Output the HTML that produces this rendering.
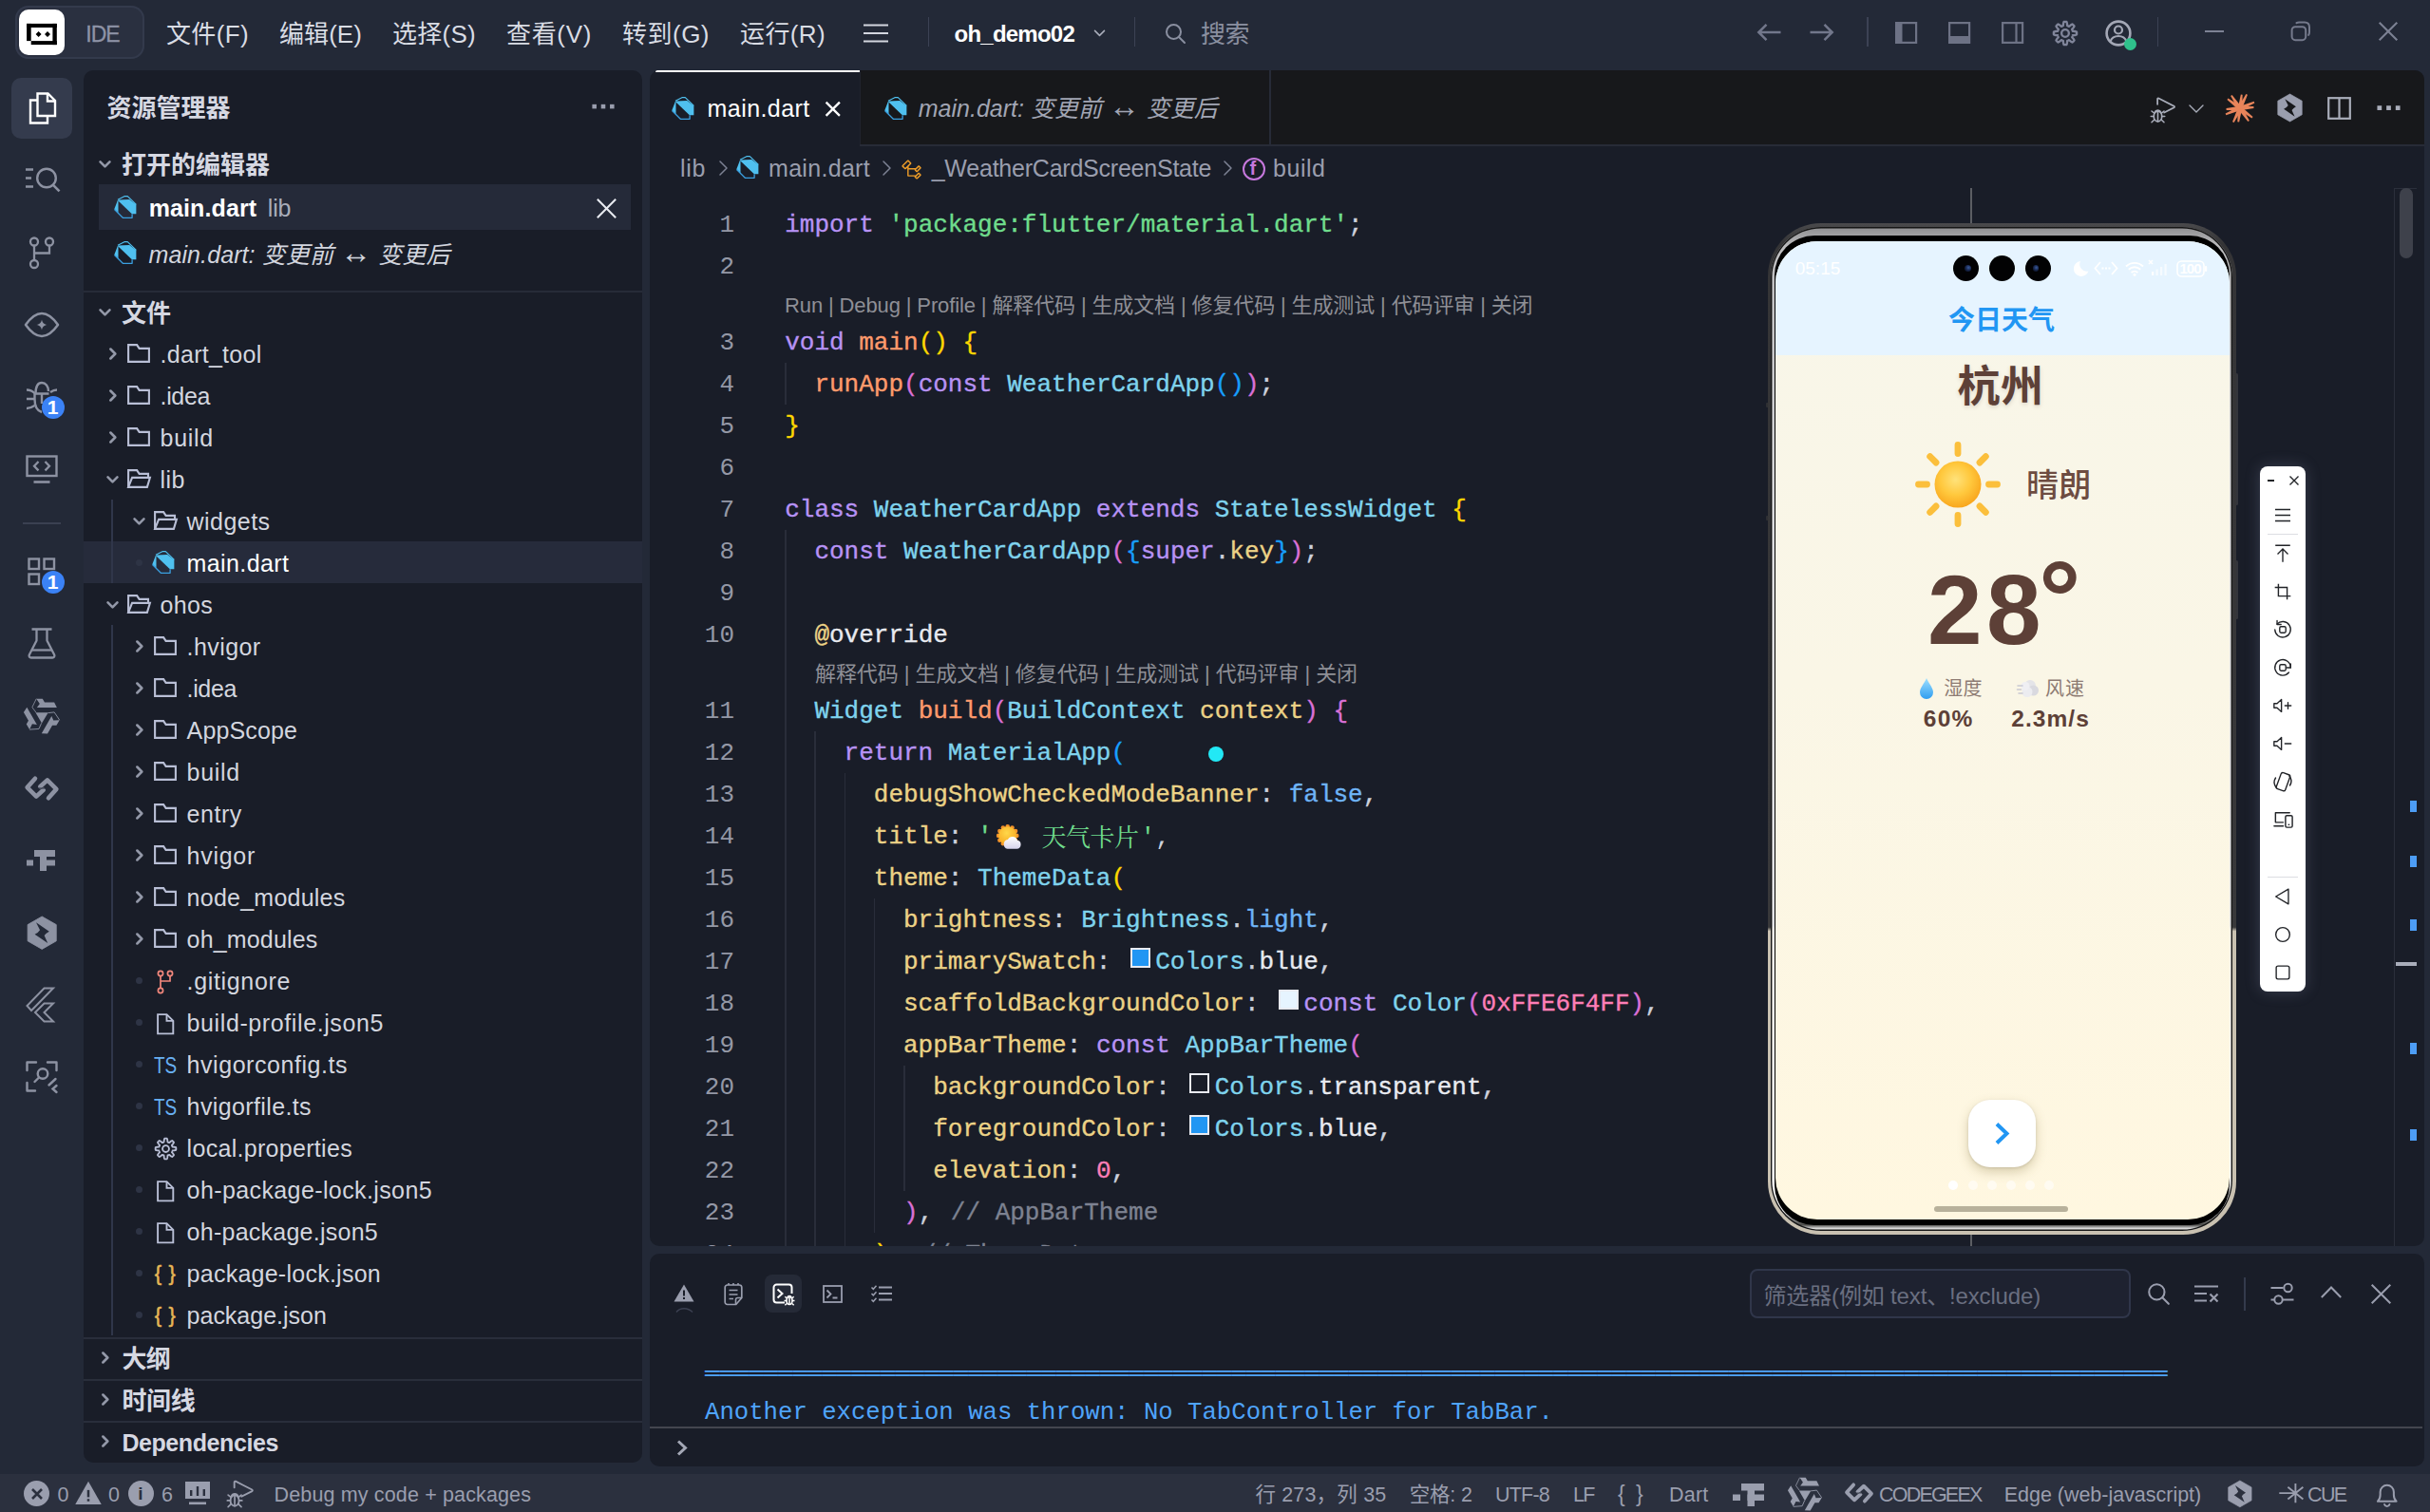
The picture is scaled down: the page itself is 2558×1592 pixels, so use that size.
<!DOCTYPE html>
<html lang="zh-CN"><head><meta charset="utf-8"><title>IDE - oh_demo02</title>
<style>
html,body{margin:0;padding:0;}
body{width:2558px;height:1592px;overflow:hidden;background:#232937;position:relative;font-family:'Liberation Sans','Noto Sans CJK SC',sans-serif;font-size:25px;color:#d3d6df;}
.a{position:absolute;display:block;}
.t{position:absolute;white-space:pre;}
.c{position:absolute;overflow:hidden;}
svg{overflow:visible;}
</style></head>
<body>
<div class="a" style="left:88px;top:74px;width:588px;height:1466px;background:#191d28;border-radius:10px;"></div>
<div class="a" style="left:684px;top:74px;width:1868px;height:1238px;background:#191d28;border-radius:10px;"></div>
<div class="a" style="left:684px;top:1320px;width:1868px;height:224px;background:#191d28;border-radius:10px;"></div>
<div class="a" style="left:0px;top:1552px;width:2558px;height:40px;background:#2b303e;"></div>
<div class="a" style="left:16.200px;top:6px;width:136px;height:56px;border-radius:14px;background:#2a3040;box-shadow:inset 0 0 0 2px #333a4c;"></div>
<div class="a" style="left:20px;top:10px;width:48px;height:48.3px;background:#ffffff;border-radius:10px;"></div>
<svg class="a" style="left:20px;top:10px;" width="48" height="48" viewBox="0 0 48 48"><rect x="8.100" y="14.900" width="31.700" height="4.100" fill="#000"/><rect x="8.100" y="14.900" width="4.600" height="18.200" fill="#000"/><rect x="35.400" y="14.900" width="4.400" height="22.200" fill="#000"/><rect x="12.700" y="33.100" width="27.100" height="4" fill="#000"/><path d="M20.600 23l3 3-3 3-3-3zM30 23l3 3-3 3-3-3z" fill="#000"/></svg>
<div class="t" id="f1" style="top:15.93px;height:40px;line-height:40px;font-size:23px;color:#8e93a6;left:90.2px;letter-spacing:-0.948px;-webkit-text-stroke-width:0.3px;">IDE</div>
<div class="t" id="f2" style="top:15.99px;height:40px;line-height:40px;font-size:26px;color:#d9dce4;left:175px;letter-spacing:0.359px;">文件(F)</div>
<div class="t" id="f3" style="top:15.99px;height:40px;line-height:40px;font-size:26px;color:#d9dce4;left:294px;letter-spacing:0.066px;">编辑(E)</div>
<div class="t" id="f4" style="top:15.99px;height:40px;line-height:40px;font-size:26px;color:#d9dce4;left:413px;letter-spacing:0.266px;">选择(S)</div>
<div class="t" id="f5" style="top:15.99px;height:40px;line-height:40px;font-size:26px;color:#d9dce4;left:533px;letter-spacing:0.666px;">查看(V)</div>
<div class="t" id="f6" style="top:15.99px;height:40px;line-height:40px;font-size:26px;color:#d9dce4;left:655px;letter-spacing:0.491px;">转到(G)</div>
<div class="t" id="f7" style="top:15.99px;height:40px;line-height:40px;font-size:26px;color:#d9dce4;left:779px;letter-spacing:0.381px;">运行(R)</div>
<svg class="a" style="left:909px;top:24px;" width="26" height="22" viewBox="0 0 26 22"><path d="M0 2.5h26M0 11h26M0 19.5h26" stroke="#d3d6df" stroke-width="2.2" fill="none"/></svg>
<div class="a" style="left:976.5px;top:18px;width:1.5px;height:31px;background:#3c4254;"></div>
<div class="t" id="f8" style="top:15.68px;height:40px;line-height:40px;font-size:24px;color:#ffffff;left:1004.5px;font-weight:700;letter-spacing:-0.764px;">oh_demo02</div>
<svg class="a" style="left:1148.5px;top:25.5px;" width="17" height="17" viewBox="0 0 24 24"><polyline points="5,9 12,16 19,9" fill="none" stroke="#a9adba" stroke-width="2.2" stroke-linecap="round" stroke-linejoin="round" /></svg>
<div class="a" style="left:1193.5px;top:18px;width:1.5px;height:31px;background:#3c4254;"></div>
<svg class="a" style="left:1225.0px;top:23.0px;" width="24" height="24" viewBox="0 0 24 24"><circle cx="10.5" cy="10.5" r="7.5" fill="none" stroke="#8a8fa0" stroke-width="2" stroke-linecap="round" stroke-linejoin="round" /><path d="M16 16L22 22" fill="none" stroke="#8a8fa0" stroke-width="2" stroke-linecap="round" stroke-linejoin="round" /></svg>
<div class="t" id="f9" style="top:15.99px;height:40px;line-height:40px;font-size:26px;color:#8a8fa0;left:1264px;letter-spacing:-0.508px;">搜索</div>
<svg class="a" style="left:1849px;top:25px;" width="26" height="18" viewBox="0 0 26 18"><path d="M25.500 9H2.500M10.500 0.800L2.300 9l8.200 8.200" fill="none" stroke="#72778b" stroke-width="2.500"/></svg>
<svg class="a" style="left:1905px;top:25px;" width="26" height="18" viewBox="0 0 26 18"><path d="M0.500 9h23M15.500 0.800L23.700 9l-8.200 8.200" fill="none" stroke="#72778b" stroke-width="2.500"/></svg>
<div class="a" style="left:1965px;top:18px;width:1.5px;height:31px;background:#3c4254;"></div>
<svg class="a" style="left:1994.5px;top:23px;" width="24" height="23" viewBox="0 0 24 23"><rect x="1.100" y="1.100" width="21" height="20.800" fill="none" stroke="#6d7285" stroke-width="2.200"/><rect x="1" y="1" width="6.500" height="21" fill="#6d7285"/></svg>
<svg class="a" style="left:2050.5px;top:23px;" width="24" height="23" viewBox="0 0 24 23"><rect x="1.100" y="1.100" width="21" height="20.800" fill="none" stroke="#6d7285" stroke-width="2.200"/><rect x="1" y="15" width="21" height="7" fill="#6d7285"/></svg>
<svg class="a" style="left:2106.5px;top:23px;" width="24" height="23" viewBox="0 0 24 23"><rect x="1.100" y="1.100" width="21" height="20.800" fill="none" stroke="#6d7285" stroke-width="2.200"/><path d="M15.500 1v21" stroke="#6d7285" stroke-width="2.200"/></svg>
<svg class="a" style="left:2160.0px;top:20.5px;" width="28" height="28" viewBox="0 0 24 24"><polygon points="12.00,1.60 12.41,1.61 12.82,1.63 13.22,1.67 13.52,2.42 13.70,3.47 13.80,4.51 13.90,5.26 14.16,5.34 14.42,5.43 14.68,5.53 14.93,5.64 15.18,5.76 15.42,5.89 16.02,5.43 16.83,4.77 17.70,4.15 18.44,3.83 18.75,4.09 19.06,4.36 19.35,4.65 19.64,4.94 19.91,5.25 20.17,5.56 19.85,6.30 19.23,7.17 18.57,7.98 18.11,8.58 18.24,8.82 18.36,9.07 18.47,9.32 18.57,9.58 18.66,9.84 18.74,10.10 19.49,10.20 20.53,10.30 21.58,10.48 22.33,10.78 22.37,11.18 22.39,11.59 22.40,12.00 22.39,12.41 22.37,12.82 22.33,13.22 21.58,13.52 20.53,13.70 19.49,13.80 18.74,13.90 18.66,14.16 18.57,14.42 18.47,14.68 18.36,14.93 18.24,15.18 18.11,15.42 18.57,16.02 19.23,16.83 19.85,17.70 20.17,18.44 19.91,18.75 19.64,19.06 19.35,19.35 19.06,19.64 18.75,19.91 18.44,20.17 17.70,19.85 16.83,19.23 16.02,18.57 15.42,18.11 15.18,18.24 14.93,18.36 14.68,18.47 14.42,18.57 14.16,18.66 13.90,18.74 13.80,19.49 13.70,20.53 13.52,21.58 13.22,22.33 12.82,22.37 12.41,22.39 12.00,22.40 11.59,22.39 11.18,22.37 10.78,22.33 10.48,21.58 10.30,20.53 10.20,19.49 10.10,18.74 9.84,18.66 9.58,18.57 9.32,18.47 9.07,18.36 8.82,18.24 8.58,18.11 7.98,18.57 7.17,19.23 6.30,19.85 5.56,20.17 5.25,19.91 4.94,19.64 4.65,19.35 4.36,19.06 4.09,18.75 3.83,18.44 4.15,17.70 4.77,16.83 5.43,16.02 5.89,15.42 5.76,15.18 5.64,14.93 5.53,14.68 5.43,14.42 5.34,14.16 5.26,13.90 4.51,13.80 3.47,13.70 2.42,13.52 1.67,13.22 1.63,12.82 1.61,12.41 1.60,12.00 1.61,11.59 1.63,11.18 1.67,10.78 2.42,10.48 3.47,10.30 4.51,10.20 5.26,10.10 5.34,9.84 5.43,9.58 5.53,9.32 5.64,9.07 5.76,8.82 5.89,8.58 5.43,7.98 4.77,7.17 4.15,6.30 3.83,5.56 4.09,5.25 4.36,4.94 4.65,4.65 4.94,4.36 5.25,4.09 5.56,3.83 6.30,4.15 7.17,4.77 7.98,5.43 8.58,5.89 8.82,5.76 9.07,5.64 9.32,5.53 9.58,5.43 9.84,5.34 10.10,5.26 10.20,4.51 10.30,3.47 10.48,2.42 10.78,1.67 11.18,1.63 11.59,1.61" fill="none" stroke="#80859a" stroke-width="2.0" stroke-linecap="round" stroke-linejoin="round" /><circle cx="12" cy="12" r="3.3" fill="none" stroke="#80859a" stroke-width="2.0" stroke-linecap="round" stroke-linejoin="round" /></svg>
<svg class="a" style="left:2215px;top:20px;" width="30" height="30" viewBox="0 0 30 30"><circle cx="15" cy="15" r="12.400" fill="none" stroke="#a4a8b6" stroke-width="2.600"/><circle cx="15" cy="11.5" r="4" fill="none" stroke="#a4a8b6" stroke-width="2.2"/><path d="M6.5 23.5c1.5-4 4.5-5.5 8.5-5.5s7 1.5 8.5 5.5" fill="none" stroke="#a4a8b6" stroke-width="2.2"/></svg>
<div class="a" style="left:2236px;top:40px;width:12.5px;height:12.5px;background:#2fc18c;border-radius:7px;"></div>
<div class="a" style="left:2270.5px;top:18px;width:1.5px;height:31px;background:#3c4254;"></div>
<div class="a" style="left:2320.5px;top:31.8px;width:20.3px;height:2.2px;background:#7d8294;"></div>
<svg class="a" style="left:2411px;top:22px;" width="22" height="21" viewBox="0 0 22 21"><rect x="1.600" y="6.200" width="14.600" height="14" rx="3.600" fill="none" stroke="#757a8c" stroke-width="2"/><path d="M6.500 2.200c.8-.5 1.700-.7 2.800-.7H15c3 0 5 2 5 5v5.200c0 1.400-.3 2.400-.9 3.200" fill="none" stroke="#757a8c" stroke-width="2" stroke-linecap="round"/></svg>
<svg class="a" style="left:2504px;top:22.5px;" width="20" height="20" viewBox="0 0 20 20"><path d="M0.700 0.700l18.600 18.600M19.300 0.700L0.700 19.300" stroke="#7c8193" stroke-width="2.100" fill="none"/></svg>
<div class="a" style="left:12px;top:82px;width:64px;height:64px;background:#343b4d;border-radius:10px;"></div>
<svg class="a" style="left:30px;top:97px;" width="30" height="34" viewBox="0 0 30 34"><path d="M9.5 1.5h11l7.5 7.5v16h-18.5z" fill="none" stroke="#fff" stroke-width="2.4" stroke-linejoin="miter"/><path d="M20 1.5v8h8" fill="none" stroke="#fff" stroke-width="2.4"/><path d="M9.5 8.5h-7.5v24h18v-7" fill="none" stroke="#fff" stroke-width="2.4"/></svg>
<svg class="a" style="left:26px;top:176px;" width="38" height="27" viewBox="0 0 38 27"><circle cx="23" cy="11.5" r="9.8" fill="none" stroke="#8d92a2" stroke-width="2.4"/><path d="M30 18.8l6.5 6.5" stroke="#8d92a2" stroke-width="2.6" fill="none"/><path d="M1 2.5h8M1 11.5h6M1 20.500h8" stroke="#8d92a2" stroke-width="2.4" fill="none"/></svg>
<svg class="a" style="left:30px;top:249px;" width="28" height="35" viewBox="0 0 28 35"><circle cx="6" cy="5.5" r="4" fill="none" stroke="#8d92a2" stroke-width="2.3"/><circle cx="22" cy="5.5" r="4" fill="none" stroke="#8d92a2" stroke-width="2.3"/><circle cx="6" cy="29" r="4" fill="none" stroke="#8d92a2" stroke-width="2.3"/><path d="M6 9.500v15.5M22 9.500v8h-16" fill="none" stroke="#8d92a2" stroke-width="2.3"/></svg>
<svg class="a" style="left:25px;top:328px;" width="38" height="28" viewBox="0 0 38 28"><path d="M2 14C8 5.500 13 2 19 2s11 3.500 17 12c-6 8.500-11 12-17 12S8 22.500 2 14z" fill="none" stroke="#8d92a2" stroke-width="2.5" stroke-linejoin="round"/><path d="M19 8.500c.8 3.500 2 4.700 5.500 5.500-3.500.8-4.700 2-5.500 5.500-.8-3.500-2-4.700-5.500-5.500 3.500-.8 4.700-2 5.500-5.500z" fill="#8d92a2"/></svg>
<svg class="a" style="left:27px;top:401px;" width="34" height="34" viewBox="0 0 34 34"><path d="M17 33C10 31 9.500 24 9.500 19v-5.500h15" fill="none" stroke="#8d92a2" stroke-width="2.4"/><path d="M10.500 13.500C10.500 6 13 2 17 2s7 3.500 7 9" fill="none" stroke="#8d92a2" stroke-width="2.4"/><path d="M17 13.500V24M1 9.500c4 0 6 1 8.500 3.500M1 19h8M1 29c3.500 0 5.500-1 8.500-3M33 9.500c-3 0-5 1-7 2.500" fill="none" stroke="#8d92a2" stroke-width="2.4"/></svg>
<div class="a" style="left:44px;top:417px;width:24px;height:24px;background:#3b82f6;border-radius:12px;"></div>
<div class="t" style="top:409.02px;height:40px;line-height:40px;font-size:21px;color:#fff;left:49.8px;font-weight:700;">1</div>
<svg class="a" style="left:27px;top:479px;" width="34" height="31" viewBox="0 0 34 31"><rect x="1.500" y="1.500" width="31" height="20.500" fill="none" stroke="#8d92a2" stroke-width="2.4"/><path d="M8.500 28.500h17" stroke="#8d92a2" stroke-width="2.6" fill="none"/><path d="M13.500 7l-4.500 4.700 4.500 4.700M20.500 7l4.500 4.700-4.500 4.700" fill="none" stroke="#8d92a2" stroke-width="2.3"/></svg>
<div class="a" style="left:24px;top:549.5px;width:40px;height:2px;background:#3a4051;"></div>
<svg class="a" style="left:29px;top:587px;" width="30" height="30" viewBox="0 0 30 30"><rect x="1.500" y="1.500" width="10.500" height="10.500" fill="none" stroke="#8d92a2" stroke-width="2.4"/><rect x="17.500" y="1.500" width="10.500" height="10.500" fill="none" stroke="#8d92a2" stroke-width="2.4"/><rect x="1.500" y="17.500" width="10.500" height="10.500" fill="none" stroke="#8d92a2" stroke-width="2.4"/></svg>
<div class="a" style="left:44px;top:601px;width:24px;height:24px;background:#3b82f6;border-radius:12px;"></div>
<div class="t" style="top:593.02px;height:40px;line-height:40px;font-size:21px;color:#fff;left:49.8px;font-weight:700;">1</div>
<svg class="a" style="left:29px;top:661px;" width="30" height="33" viewBox="0 0 30 33"><path d="M4.500 1.500h21M9.500 1.500v12L1.800 28.500c-.6 1.500.3 3 2 3h22.400c1.700 0 2.600-1.500 2-3L20.500 13.500v-12" fill="none" stroke="#8d92a2" stroke-width="2.3" stroke-linejoin="round"/><path d="M5 23.500h20" stroke="#8d92a2" stroke-width="2.3" fill="none"/></svg>
<svg class="a" style="left:26.0px;top:736.0px;" width="36" height="36" viewBox="0 0 24 24"><g transform="rotate(0 12 12)"><polygon points="8.160,-0.170 12.530,-0.170 13.980,2.340 20.730,2.340 22.580,6.050 8.560,6.050 10.540,3.400" fill="#8d92a2"/><polyline points="8.160,-0.170 5.250,5.780 7.900,9.350" fill="none" stroke="#8d92a2" stroke-width="0.550"/></g><g transform="rotate(120 12 12)"><polygon points="8.160,-0.170 12.530,-0.170 13.980,2.340 20.730,2.340 22.580,6.050 8.560,6.050 10.540,3.400" fill="#8d92a2"/><polyline points="8.160,-0.170 5.250,5.780 7.900,9.350" fill="none" stroke="#8d92a2" stroke-width="0.550"/></g><g transform="rotate(240 12 12)"><polygon points="8.160,-0.170 12.530,-0.170 13.980,2.340 20.730,2.340 22.580,6.050 8.560,6.050 10.540,3.400" fill="#8d92a2"/><polyline points="8.160,-0.170 5.250,5.780 7.900,9.350" fill="none" stroke="#8d92a2" stroke-width="0.550"/></g><polygon points="7.630,9.490 16.500,9.490 12,17.030" fill="#8d92a2"/></svg>
<svg class="a" style="left:25.0px;top:811.0px;" width="38" height="38" viewBox="0 0 24 24"><path d="M7.560 5.560L2.300 11.450L8.320 17.460L13.080 13.080" fill="none" stroke="#8d92a2" stroke-width="2.9" stroke-linejoin="round" stroke-linecap="round"/><path d="M16.440 18.440L21.700 12.550L15.680 6.540L10.920 10.920" fill="none" stroke="#8d92a2" stroke-width="2.9" stroke-linejoin="round" stroke-linecap="round"/><path d="M9.800 12H14.400" stroke="#232937" stroke-width="0.600" fill="none"/></svg>
<svg class="a" style="left:28px;top:895px;" width="30" height="22" viewBox="0 0 30 22"><rect x="8" y="0" width="22" height="7" fill="#8d92a2"/><rect x="14" y="7" width="7" height="15" fill="#8d92a2"/><rect x="14" y="10.500" width="16" height="6" fill="#8d92a2"/><rect x="0" y="10.500" width="7" height="6" fill="#8d92a2"/></svg>
<svg class="a" style="left:26.8px;top:964.8px;" width="34.4" height="34.4" viewBox="0 0 24 24"><polygon points="12,0 22.500,6 22.500,18 12,24 1.500,18 1.500,6" fill="#8d92a2" stroke="#8d92a2" stroke-width="0.600" stroke-linejoin="round"/><path d="M7.700 4.300L17.300 11Q15 12.300 13.700 14L16.200 19.600L6.700 13.100Q9.500 11.800 10.500 10Z" fill="#232937"/></svg>
<svg class="a" style="left:27px;top:1039px;" width="31" height="38" viewBox="0 0 31 38"><path d="M19.500 1.500h9.500L6 25 1.500 20z" fill="none" stroke="#8d92a2" stroke-width="2" stroke-linejoin="miter"/><path d="M19.500 17.500h9.500L19.500 27l9.500 9.500h-9.500L10 27z" fill="none" stroke="#8d92a2" stroke-width="2" stroke-linejoin="miter"/></svg>
<svg class="a" style="left:27px;top:1117px;" width="34" height="34" viewBox="0 0 34 34"><path d="M1.500 10V1.500H11M23 1.500h9.500V10M1.500 23v8.500H10" fill="none" stroke="#8d92a2" stroke-width="2.4" stroke-linecap="round" stroke-linejoin="round"/><circle cx="18" cy="13.500" r="5.300" fill="none" stroke="#8d92a2" stroke-width="2.4"/><path d="M14 17.500l-4.500 4.500" stroke="#8d92a2" stroke-width="2.4" stroke-linecap="round"/><path d="M31.500 19l-7 6.500M32.500 26l-4 3.500 4 3.500" fill="none" stroke="#8d92a2" stroke-width="2.4" stroke-linecap="round"/></svg>
<div class="a" style="left:25px;top:1559px;width:27px;height:27px;background:#9a9eae;border-radius:14px;"></div>
<svg class="a" style="left:31.5px;top:1565.5px;" width="14" height="14" viewBox="0 0 14 14"><path d="M2 2l10 10M12 2L2 12" stroke="#2b303e" stroke-width="2.6" fill="none"/></svg>
<div class="t" style="top:1553.65px;height:40px;line-height:40px;font-size:21.5px;color:#9a9eae;left:60.5px;">0</div>
<svg class="a" style="left:78.0px;top:1556.8px;" width="30" height="30" viewBox="0 0 24 24"><path d="M12 2.2L23 21.5H1z" fill="#9a9eae"/><rect x="11" y="9.5" width="2" height="6" fill="#2b303e"/><rect x="11" y="17" width="2" height="2" fill="#2b303e"/></svg>
<div class="t" style="top:1553.65px;height:40px;line-height:40px;font-size:21.5px;color:#9a9eae;left:114px;">0</div>
<div class="a" style="left:134.5px;top:1559px;width:27px;height:27px;background:#9a9eae;border-radius:14px;"></div>
<div class="t" style="top:1553.02px;height:40px;line-height:40px;font-size:19px;color:#2b303e;left:145.2px;font-weight:700;">i</div>
<div class="t" style="top:1553.65px;height:40px;line-height:40px;font-size:21.5px;color:#9a9eae;left:170px;">6</div>
<svg class="a" style="left:195px;top:1560px;" width="26" height="25" viewBox="0 0 26 25"><rect x="0" y="0" width="26" height="18" fill="#9a9eae"/><rect x="5" y="9" width="2.400" height="6" fill="#2b303e"/><rect x="11.800" y="5" width="2.400" height="10" fill="#2b303e"/><rect x="18.600" y="8" width="2.400" height="7" fill="#2b303e"/><rect x="4" y="21.500" width="18" height="2.600" fill="#9a9eae"/></svg>
<svg class="a" style="left:238.0px;top:1556.5px;" width="32" height="32" viewBox="0 0 24 24"><path d="M6.5 7V2.6c0-.5.5-.8 1-.6l13 6.6c.5.3.5.9 0 1.2L12.2 14" fill="none" stroke="#9a9eae" stroke-width="1.4" stroke-linecap="round" stroke-linejoin="round" /><ellipse cx="6.8" cy="17.2" rx="3.4" ry="4.3" fill="none" stroke="#9a9eae" stroke-width="1.4" stroke-linecap="round" stroke-linejoin="round" /><path d="M4.2 13.8a2.8 2.8 0 0 1 5.2 0" fill="none" stroke="#9a9eae" stroke-width="1.4" stroke-linecap="round" stroke-linejoin="round" /><path d="M6.8 13.5v8M3.4 17.2H1M12.6 17.2h-2.4M3.8 14.6L1.6 12.8M9.8 14.6l2.2-1.8M3.9 20l-2.3 2.2M9.7 20l2.3 2.2" fill="none" stroke="#9a9eae" stroke-width="1.26" stroke-linecap="round" stroke-linejoin="round" /></svg>
<div class="t" id="f10" style="top:1553.65px;height:40px;line-height:40px;font-size:21.5px;color:#9a9eae;left:288.6px;letter-spacing:0.141px;">Debug my code + packages</div>
<div class="t" id="f11" style="top:1553.65px;height:40px;line-height:40px;font-size:21.5px;color:#9a9eae;left:1321.4px;letter-spacing:0.177px;">行 273，列 35</div>
<div class="t" id="f12" style="top:1553.65px;height:40px;line-height:40px;font-size:21.5px;color:#9a9eae;left:1483.7px;letter-spacing:-0.181px;">空格: 2</div>
<div class="t" id="f13" style="top:1553.65px;height:40px;line-height:40px;font-size:21.5px;color:#9a9eae;left:1574px;letter-spacing:-0.784px;">UTF-8</div>
<div class="t" id="f14" style="top:1553.65px;height:40px;line-height:40px;font-size:21.5px;color:#9a9eae;left:1656px;letter-spacing:-1.797px;">LF</div>
<div class="t" id="f15" style="top:1552.63px;height:40px;line-height:40px;font-size:23px;color:#9a9eae;left:1703px;letter-spacing:2.411px;">{ }</div>
<div class="t" id="f16" style="top:1553.65px;height:40px;line-height:40px;font-size:21.5px;color:#9a9eae;left:1757px;letter-spacing:0.219px;">Dart</div>
<svg class="a" style="left:1824px;top:1562px;" width="33" height="24" viewBox="0 0 33 24"><rect x="9" y="0" width="24" height="7.500" fill="#9a9eae"/><rect x="15.500" y="7" width="7.500" height="17" fill="#9a9eae"/><rect x="15.500" y="11.500" width="17.500" height="6.500" fill="#9a9eae"/><rect x="0" y="11.500" width="8" height="6.500" fill="#9a9eae"/></svg>
<svg class="a" style="left:1883.0px;top:1556.0px;" width="34" height="34" viewBox="0 0 24 24"><g transform="rotate(0 12 12)"><polygon points="8.160,-0.170 12.530,-0.170 13.980,2.340 20.730,2.340 22.580,6.050 8.560,6.050 10.540,3.400" fill="#9a9eae"/><polyline points="8.160,-0.170 5.250,5.780 7.900,9.350" fill="none" stroke="#9a9eae" stroke-width="0.550"/></g><g transform="rotate(120 12 12)"><polygon points="8.160,-0.170 12.530,-0.170 13.980,2.340 20.730,2.340 22.580,6.050 8.560,6.050 10.540,3.400" fill="#9a9eae"/><polyline points="8.160,-0.170 5.250,5.780 7.900,9.350" fill="none" stroke="#9a9eae" stroke-width="0.550"/></g><g transform="rotate(240 12 12)"><polygon points="8.160,-0.170 12.530,-0.170 13.980,2.340 20.730,2.340 22.580,6.050 8.560,6.050 10.540,3.400" fill="#9a9eae"/><polyline points="8.160,-0.170 5.250,5.780 7.900,9.350" fill="none" stroke="#9a9eae" stroke-width="0.550"/></g><polygon points="7.630,9.490 16.500,9.490 12,17.030" fill="#9a9eae"/></svg>
<svg class="a" style="left:1940.5px;top:1556.0px;" width="32" height="32" viewBox="0 0 24 24"><path d="M7.560 5.560L2.300 11.450L8.320 17.460L13.080 13.080" fill="none" stroke="#9a9eae" stroke-width="2.9" stroke-linejoin="round" stroke-linecap="round"/><path d="M16.440 18.440L21.700 12.550L15.680 6.540L10.920 10.920" fill="none" stroke="#9a9eae" stroke-width="2.9" stroke-linejoin="round" stroke-linecap="round"/><path d="M9.800 12H14.400" stroke="#2b303e" stroke-width="0.600" fill="none"/></svg>
<div class="t" id="f17" style="top:1553.65px;height:40px;line-height:40px;font-size:21.5px;color:#9a9eae;left:1978px;letter-spacing:-1.797px;">CODEGEEX</div>
<div class="t" id="f18" style="top:1553.65px;height:40px;line-height:40px;font-size:21.5px;color:#9a9eae;left:2109.7px;letter-spacing:-0.020px;">Edge (web-javascript)</div>
<svg class="a" style="left:2343.6px;top:1559.1px;" width="27.8" height="27.8" viewBox="0 0 24 24"><polygon points="12,0 22.500,6 22.500,18 12,24 1.500,18 1.500,6" fill="#9a9eae" stroke="#9a9eae" stroke-width="0.600" stroke-linejoin="round"/><path d="M7.700 4.300L17.300 11Q15 12.300 13.700 14L16.200 19.600L6.700 13.100Q9.500 11.800 10.500 10Z" fill="#2b303e"/></svg>
<svg class="a" style="left:2398px;top:1560px;" width="27" height="25" viewBox="0 0 27 25"><path d="M18.400 1.900v20.400M1.300 12.100h17.100M10.400 5.800l16 12.600M10.400 18.400l16-12.600" stroke="#9a9eae" stroke-width="1.900" fill="none"/></svg>
<div class="t" id="f19" style="top:1553.65px;height:40px;line-height:40px;font-size:21.5px;color:#9a9eae;left:2429px;letter-spacing:-1.635px;">CUE</div>
<svg class="a" style="left:2497.75px;top:1557.55px;" width="29.5" height="29.5" viewBox="0 0 24 24"><path d="M4 18.5h16c-1.6-1.4-2.2-3-2.2-5.5V10.5a5.8 5.8 0 0 0-11.6 0V13c0 2.5-.6 4.1-2.2 5.5z" fill="none" stroke="#9a9eae" stroke-width="1.65" stroke-linecap="round" stroke-linejoin="round" /><path d="M9.8 21.2a2.3 2.3 0 0 0 4.4 0" fill="none" stroke="#9a9eae" stroke-width="1.65" stroke-linecap="round" stroke-linejoin="round" /></svg>
<div class="t" id="f20" style="top:94.49px;height:40px;line-height:40px;font-size:26px;color:#d6d8e2;left:112.4px;font-weight:700;letter-spacing:-0.003px;">资源管理器</div>
<svg class="a" style="left:621.5px;top:99.0px;" width="26" height="26" viewBox="0 0 24 24"><rect x="1.300" y="10" width="4.200" height="4.200" fill="#9a9eae"/><rect x="9.900" y="10" width="4.200" height="4.200" fill="#9a9eae"/><rect x="18.500" y="10" width="4.200" height="4.200" fill="#9a9eae"/></svg>
<svg class="a" style="left:101.5px;top:163.5px;" width="17" height="17" viewBox="0 0 24 24"><polyline points="5,9 12,16 19,9" fill="none" stroke="#9398a8" stroke-width="3.7" stroke-linecap="round" stroke-linejoin="round" /></svg>
<div class="t" id="f21" style="top:153.99px;height:40px;line-height:40px;font-size:26px;color:#d6d8e2;left:128px;font-weight:700;letter-spacing:-0.003px;">打开的编辑器</div>
<div class="a" style="left:104px;top:194px;width:560px;height:48px;background:#252a39;"></div>
<svg class="a" style="left:119.8px;top:205.6px;" width="24" height="24" viewBox="0 0 24 24"><polygon points="4.250,4.400 16.200,4.100 23.400,9.400 23.400,19.300 19.600,19.300 18.300,18.700 4.500,5.400" fill="#4fc0ef"/><polygon points="4,4.400 0.300,14.200 4.500,18.100 4.500,5.400" fill="#4fc0ef"/><polyline points="4,4.200 10.900,0.700 14.300,0.600 23.400,9.400" fill="none" stroke="#4fc0ef" stroke-width="1.200" stroke-linejoin="round"/><polyline points="0.500,14.500 9.300,23.300 19.100,23.300 19.100,19.300" fill="none" stroke="#3a9fe0" stroke-width="1.300" stroke-linejoin="round"/></svg>
<div class="t" id="f22" style="top:199.34px;height:40px;line-height:40px;font-size:25px;color:#ffffff;left:156.7px;font-weight:700;letter-spacing:0.108px;">main.dart</div>
<div class="t" id="f23" style="top:199.34px;height:40px;line-height:40px;font-size:25px;color:#a9adba;left:281.8px;letter-spacing:-0.172px;">lib</div>
<svg class="a" style="left:623.5px;top:204.5px;" width="29" height="29" viewBox="0 0 24 24"><path d="M4 4L20 20M20 4L4 20" fill="none" stroke="#e8eaf0" stroke-width="1.7" stroke-linecap="butt" stroke-linejoin="miter" /></svg>
<svg class="a" style="left:119.8px;top:253.6px;" width="24" height="24" viewBox="0 0 24 24"><polygon points="4.250,4.400 16.200,4.100 23.400,9.400 23.400,19.300 19.600,19.300 18.300,18.700 4.500,5.400" fill="#4fc0ef"/><polygon points="4,4.400 0.300,14.200 4.500,18.100 4.500,5.400" fill="#4fc0ef"/><polyline points="4,4.200 10.900,0.700 14.300,0.600 23.400,9.400" fill="none" stroke="#4fc0ef" stroke-width="1.200" stroke-linejoin="round"/><polyline points="0.500,14.500 9.300,23.300 19.100,23.300 19.100,19.300" fill="none" stroke="#3a9fe0" stroke-width="1.300" stroke-linejoin="round"/></svg>
<div class="t" id="f24" style="top:247.84px;height:40px;line-height:40px;font-size:25px;color:#d3d6df;left:156.5px;font-style:italic;letter-spacing:0.099px;">main.dart: 变更前 <span style="font-size:33px;line-height:0">↔</span> 变更后</div>
<div class="a" style="left:88px;top:306px;width:588px;height:2px;background:#262b38;"></div>
<svg class="a" style="left:101.5px;top:320.0px;" width="17" height="17" viewBox="0 0 24 24"><polyline points="5,9 12,16 19,9" fill="none" stroke="#9398a8" stroke-width="3.7" stroke-linecap="round" stroke-linejoin="round" /></svg>
<div class="t" id="f25" style="top:310.49px;height:40px;line-height:40px;font-size:26px;color:#d6d8e2;left:128px;font-weight:700;letter-spacing:-0.008px;">文件</div>
<div class="a" style="left:88px;top:570px;width:588px;height:44px;background:#262b3b;"></div>
<div class="a" style="left:117px;top:526px;width:1.5px;height:88px;background:#30364a;"></div>
<div class="a" style="left:117px;top:658px;width:1.5px;height:748px;background:#30364a;"></div>
<svg class="a" style="left:109.5px;top:363.5px;" width="17" height="17" viewBox="0 0 24 24"><polyline points="9,5 16,12 9,19" fill="none" stroke="#9398a8" stroke-width="3.7" stroke-linecap="round" stroke-linejoin="round" /></svg>
<svg class="a" style="left:134px;top:361.5px;" width="24" height="20" viewBox="0 0 24 20"><path d="M1.100 1.100h9l2.500 3.800h10.300v14h-21.800z" fill="none" stroke="#b9bfd6" stroke-width="2.100"/></svg>
<div class="t" id="f26" style="top:353.14px;height:40px;line-height:40px;font-size:25px;color:#d3d6df;left:168.6px;letter-spacing:0.265px;">.dart_tool</div>
<svg class="a" style="left:109.5px;top:407.5px;" width="17" height="17" viewBox="0 0 24 24"><polyline points="9,5 16,12 9,19" fill="none" stroke="#9398a8" stroke-width="3.7" stroke-linecap="round" stroke-linejoin="round" /></svg>
<svg class="a" style="left:134px;top:405.5px;" width="24" height="20" viewBox="0 0 24 20"><path d="M1.100 1.100h9l2.500 3.800h10.300v14h-21.800z" fill="none" stroke="#b9bfd6" stroke-width="2.100"/></svg>
<div class="t" id="f27" style="top:397.14px;height:40px;line-height:40px;font-size:25px;color:#d3d6df;left:168.6px;letter-spacing:-0.364px;">.idea</div>
<svg class="a" style="left:109.5px;top:451.5px;" width="17" height="17" viewBox="0 0 24 24"><polyline points="9,5 16,12 9,19" fill="none" stroke="#9398a8" stroke-width="3.7" stroke-linecap="round" stroke-linejoin="round" /></svg>
<svg class="a" style="left:134px;top:449.5px;" width="24" height="20" viewBox="0 0 24 20"><path d="M1.100 1.100h9l2.500 3.800h10.300v14h-21.800z" fill="none" stroke="#b9bfd6" stroke-width="2.100"/></svg>
<div class="t" id="f28" style="top:441.14px;height:40px;line-height:40px;font-size:25px;color:#d3d6df;left:168.6px;letter-spacing:0.714px;">build</div>
<svg class="a" style="left:109.5px;top:495.5px;" width="17" height="17" viewBox="0 0 24 24"><polyline points="5,9 12,16 19,9" fill="none" stroke="#9398a8" stroke-width="3.7" stroke-linecap="round" stroke-linejoin="round" /></svg>
<svg class="a" style="left:134px;top:493.5px;" width="25" height="20" viewBox="0 0 25 20"><path d="M1.100 18.900v-17.800h9l2.500 3.800h9.400v4" fill="none" stroke="#b9bfd6" stroke-width="2.100"/><path d="M1.100 18.900l4-10h18.800l-3 10z" fill="none" stroke="#b9bfd6" stroke-width="2.100" stroke-linejoin="miter"/></svg>
<div class="t" id="f29" style="top:485.14px;height:40px;line-height:40px;font-size:25px;color:#d3d6df;left:168.6px;letter-spacing:0.461px;">lib</div>
<svg class="a" style="left:137.5px;top:539.5px;" width="17" height="17" viewBox="0 0 24 24"><polyline points="5,9 12,16 19,9" fill="none" stroke="#9398a8" stroke-width="3.7" stroke-linecap="round" stroke-linejoin="round" /></svg>
<svg class="a" style="left:162px;top:537.5px;" width="25" height="20" viewBox="0 0 25 20"><path d="M1.100 18.900v-17.800h9l2.500 3.800h9.400v4" fill="none" stroke="#b9bfd6" stroke-width="2.100"/><path d="M1.100 18.900l4-10h18.800l-3 10z" fill="none" stroke="#b9bfd6" stroke-width="2.100" stroke-linejoin="miter"/></svg>
<div class="t" id="f30" style="top:529.14px;height:40px;line-height:40px;font-size:25px;color:#d3d6df;left:196.6px;letter-spacing:0.448px;">widgets</div>
<div class="a" style="left:142.5px;top:588.5px;width:7px;height:7px;background:#2e3445;border-radius:4px;"></div>
<svg class="a" style="left:159.8px;top:579.6px;" width="24" height="24" viewBox="0 0 24 24"><polygon points="4.250,4.400 16.200,4.100 23.400,9.400 23.400,19.300 19.600,19.300 18.300,18.700 4.500,5.400" fill="#4fc0ef"/><polygon points="4,4.400 0.300,14.200 4.500,18.100 4.500,5.400" fill="#4fc0ef"/><polyline points="4,4.200 10.900,0.700 14.300,0.600 23.400,9.400" fill="none" stroke="#4fc0ef" stroke-width="1.200" stroke-linejoin="round"/><polyline points="0.500,14.500 9.300,23.300 19.100,23.300 19.100,19.300" fill="none" stroke="#3a9fe0" stroke-width="1.300" stroke-linejoin="round"/></svg>
<div class="t" id="f31" style="top:573.14px;height:40px;line-height:40px;font-size:25px;color:#ffffff;left:196.6px;letter-spacing:0.398px;">main.dart</div>
<svg class="a" style="left:109.5px;top:627.5px;" width="17" height="17" viewBox="0 0 24 24"><polyline points="5,9 12,16 19,9" fill="none" stroke="#9398a8" stroke-width="3.7" stroke-linecap="round" stroke-linejoin="round" /></svg>
<svg class="a" style="left:134px;top:625.5px;" width="25" height="20" viewBox="0 0 25 20"><path d="M1.100 18.900v-17.800h9l2.500 3.800h9.400v4" fill="none" stroke="#b9bfd6" stroke-width="2.100"/><path d="M1.100 18.900l4-10h18.800l-3 10z" fill="none" stroke="#b9bfd6" stroke-width="2.100" stroke-linejoin="miter"/></svg>
<div class="t" id="f32" style="top:617.14px;height:40px;line-height:40px;font-size:25px;color:#d3d6df;left:168.6px;letter-spacing:0.295px;">ohos</div>
<svg class="a" style="left:137.5px;top:671.5px;" width="17" height="17" viewBox="0 0 24 24"><polyline points="9,5 16,12 9,19" fill="none" stroke="#9398a8" stroke-width="3.7" stroke-linecap="round" stroke-linejoin="round" /></svg>
<svg class="a" style="left:162px;top:669.5px;" width="24" height="20" viewBox="0 0 24 20"><path d="M1.100 1.100h9l2.500 3.800h10.300v14h-21.800z" fill="none" stroke="#b9bfd6" stroke-width="2.100"/></svg>
<div class="t" id="f33" style="top:661.14px;height:40px;line-height:40px;font-size:25px;color:#d3d6df;left:196.6px;letter-spacing:0.422px;">.hvigor</div>
<svg class="a" style="left:137.5px;top:715.5px;" width="17" height="17" viewBox="0 0 24 24"><polyline points="9,5 16,12 9,19" fill="none" stroke="#9398a8" stroke-width="3.7" stroke-linecap="round" stroke-linejoin="round" /></svg>
<svg class="a" style="left:162px;top:713.5px;" width="24" height="20" viewBox="0 0 24 20"><path d="M1.100 1.100h9l2.500 3.800h10.300v14h-21.800z" fill="none" stroke="#b9bfd6" stroke-width="2.100"/></svg>
<div class="t" id="f34" style="top:705.14px;height:40px;line-height:40px;font-size:25px;color:#d3d6df;left:196.6px;letter-spacing:-0.364px;">.idea</div>
<svg class="a" style="left:137.5px;top:759.5px;" width="17" height="17" viewBox="0 0 24 24"><polyline points="9,5 16,12 9,19" fill="none" stroke="#9398a8" stroke-width="3.7" stroke-linecap="round" stroke-linejoin="round" /></svg>
<svg class="a" style="left:162px;top:757.5px;" width="24" height="20" viewBox="0 0 24 20"><path d="M1.100 1.100h9l2.500 3.800h10.300v14h-21.800z" fill="none" stroke="#b9bfd6" stroke-width="2.100"/></svg>
<div class="t" id="f35" style="top:749.14px;height:40px;line-height:40px;font-size:25px;color:#d3d6df;left:196.6px;letter-spacing:0.128px;">AppScope</div>
<svg class="a" style="left:137.5px;top:803.5px;" width="17" height="17" viewBox="0 0 24 24"><polyline points="9,5 16,12 9,19" fill="none" stroke="#9398a8" stroke-width="3.7" stroke-linecap="round" stroke-linejoin="round" /></svg>
<svg class="a" style="left:162px;top:801.5px;" width="24" height="20" viewBox="0 0 24 20"><path d="M1.100 1.100h9l2.500 3.800h10.300v14h-21.800z" fill="none" stroke="#b9bfd6" stroke-width="2.100"/></svg>
<div class="t" id="f36" style="top:793.14px;height:40px;line-height:40px;font-size:25px;color:#d3d6df;left:196.6px;letter-spacing:0.674px;">build</div>
<svg class="a" style="left:137.5px;top:847.5px;" width="17" height="17" viewBox="0 0 24 24"><polyline points="9,5 16,12 9,19" fill="none" stroke="#9398a8" stroke-width="3.7" stroke-linecap="round" stroke-linejoin="round" /></svg>
<svg class="a" style="left:162px;top:845.5px;" width="24" height="20" viewBox="0 0 24 20"><path d="M1.100 1.100h9l2.500 3.800h10.300v14h-21.800z" fill="none" stroke="#b9bfd6" stroke-width="2.100"/></svg>
<div class="t" id="f37" style="top:837.14px;height:40px;line-height:40px;font-size:25px;color:#d3d6df;left:196.6px;letter-spacing:0.521px;">entry</div>
<svg class="a" style="left:137.5px;top:891.5px;" width="17" height="17" viewBox="0 0 24 24"><polyline points="9,5 16,12 9,19" fill="none" stroke="#9398a8" stroke-width="3.7" stroke-linecap="round" stroke-linejoin="round" /></svg>
<svg class="a" style="left:162px;top:889.5px;" width="24" height="20" viewBox="0 0 24 20"><path d="M1.100 1.100h9l2.500 3.800h10.300v14h-21.800z" fill="none" stroke="#b9bfd6" stroke-width="2.100"/></svg>
<div class="t" id="f38" style="top:881.14px;height:40px;line-height:40px;font-size:25px;color:#d3d6df;left:196.6px;letter-spacing:0.718px;">hvigor</div>
<svg class="a" style="left:137.5px;top:935.5px;" width="17" height="17" viewBox="0 0 24 24"><polyline points="9,5 16,12 9,19" fill="none" stroke="#9398a8" stroke-width="3.7" stroke-linecap="round" stroke-linejoin="round" /></svg>
<svg class="a" style="left:162px;top:933.5px;" width="24" height="20" viewBox="0 0 24 20"><path d="M1.100 1.100h9l2.500 3.800h10.300v14h-21.800z" fill="none" stroke="#b9bfd6" stroke-width="2.100"/></svg>
<div class="t" id="f39" style="top:925.14px;height:40px;line-height:40px;font-size:25px;color:#d3d6df;left:196.6px;letter-spacing:0.240px;">node_modules</div>
<svg class="a" style="left:137.5px;top:979.5px;" width="17" height="17" viewBox="0 0 24 24"><polyline points="9,5 16,12 9,19" fill="none" stroke="#9398a8" stroke-width="3.7" stroke-linecap="round" stroke-linejoin="round" /></svg>
<svg class="a" style="left:162px;top:977.5px;" width="24" height="20" viewBox="0 0 24 20"><path d="M1.100 1.100h9l2.500 3.800h10.300v14h-21.800z" fill="none" stroke="#b9bfd6" stroke-width="2.100"/></svg>
<div class="t" id="f40" style="top:969.14px;height:40px;line-height:40px;font-size:25px;color:#d3d6df;left:196.6px;letter-spacing:0.168px;">oh_modules</div>
<div class="a" style="left:142.5px;top:1028.5px;width:7px;height:7px;background:#2e3445;border-radius:4px;"></div>
<svg class="a" style="left:165px;top:1021.2px;" width="18" height="26" viewBox="0 0 18 26"><circle cx="4" cy="4" r="2.600" fill="none" stroke="#f2877c" stroke-width="1.700"/><circle cx="14" cy="4" r="2.600" fill="none" stroke="#f2877c" stroke-width="1.700"/><circle cx="4" cy="22" r="2.600" fill="none" stroke="#f2877c" stroke-width="1.700"/><path d="M4 6.600v12.800M14 6.600v5.400h-10" fill="none" stroke="#f2877c" stroke-width="1.700"/></svg>
<div class="t" id="f41" style="top:1013.14px;height:40px;line-height:40px;font-size:25px;color:#d3d6df;left:196.6px;letter-spacing:0.654px;">.gitignore</div>
<div class="a" style="left:142.5px;top:1072.5px;width:7px;height:7px;background:#2e3445;border-radius:4px;"></div>
<svg class="a" style="left:165px;top:1067px;" width="19" height="23" viewBox="0 0 19 23"><path d="M1.100 1.100h9.400l6.800 6.800v13.500h-16.200z" fill="none" stroke="#b9bfd6" stroke-width="1.900"/><path d="M10.500 1.100v6.800h6.800" fill="none" stroke="#b9bfd6" stroke-width="1.900"/></svg>
<div class="t" id="f42" style="top:1057.14px;height:40px;line-height:40px;font-size:25px;color:#d3d6df;left:196.6px;letter-spacing:0.602px;">build-profile.json5</div>
<div class="a" style="left:142.5px;top:1116.5px;width:7px;height:7px;background:#2e3445;border-radius:4px;"></div>
<div class="t" style="top:1101.58px;height:40px;line-height:40px;font-size:24px;color:#68b0f3;left:162.4px;transform:scaleX(.79);transform-origin:0 50%;">TS</div>
<div class="t" id="f43" style="top:1101.14px;height:40px;line-height:40px;font-size:25px;color:#d3d6df;left:196.6px;letter-spacing:0.546px;">hvigorconfig.ts</div>
<div class="a" style="left:142.5px;top:1160.5px;width:7px;height:7px;background:#2e3445;border-radius:4px;"></div>
<div class="t" style="top:1145.58px;height:40px;line-height:40px;font-size:24px;color:#68b0f3;left:162.4px;transform:scaleX(.79);transform-origin:0 50%;">TS</div>
<div class="t" id="f44" style="top:1145.14px;height:40px;line-height:40px;font-size:25px;color:#d3d6df;left:196.6px;letter-spacing:0.381px;">hvigorfile.ts</div>
<div class="a" style="left:142.5px;top:1204.5px;width:7px;height:7px;background:#2e3445;border-radius:4px;"></div>
<svg class="a" style="left:161.5px;top:1197.2px;" width="25" height="25" viewBox="0 0 24 24"><polygon points="12.00,1.60 12.41,1.61 12.82,1.63 13.22,1.67 13.52,2.42 13.70,3.47 13.80,4.51 13.90,5.26 14.16,5.34 14.42,5.43 14.68,5.53 14.93,5.64 15.18,5.76 15.42,5.89 16.02,5.43 16.83,4.77 17.70,4.15 18.44,3.83 18.75,4.09 19.06,4.36 19.35,4.65 19.64,4.94 19.91,5.25 20.17,5.56 19.85,6.30 19.23,7.17 18.57,7.98 18.11,8.58 18.24,8.82 18.36,9.07 18.47,9.32 18.57,9.58 18.66,9.84 18.74,10.10 19.49,10.20 20.53,10.30 21.58,10.48 22.33,10.78 22.37,11.18 22.39,11.59 22.40,12.00 22.39,12.41 22.37,12.82 22.33,13.22 21.58,13.52 20.53,13.70 19.49,13.80 18.74,13.90 18.66,14.16 18.57,14.42 18.47,14.68 18.36,14.93 18.24,15.18 18.11,15.42 18.57,16.02 19.23,16.83 19.85,17.70 20.17,18.44 19.91,18.75 19.64,19.06 19.35,19.35 19.06,19.64 18.75,19.91 18.44,20.17 17.70,19.85 16.83,19.23 16.02,18.57 15.42,18.11 15.18,18.24 14.93,18.36 14.68,18.47 14.42,18.57 14.16,18.66 13.90,18.74 13.80,19.49 13.70,20.53 13.52,21.58 13.22,22.33 12.82,22.37 12.41,22.39 12.00,22.40 11.59,22.39 11.18,22.37 10.78,22.33 10.48,21.58 10.30,20.53 10.20,19.49 10.10,18.74 9.84,18.66 9.58,18.57 9.32,18.47 9.07,18.36 8.82,18.24 8.58,18.11 7.98,18.57 7.17,19.23 6.30,19.85 5.56,20.17 5.25,19.91 4.94,19.64 4.65,19.35 4.36,19.06 4.09,18.75 3.83,18.44 4.15,17.70 4.77,16.83 5.43,16.02 5.89,15.42 5.76,15.18 5.64,14.93 5.53,14.68 5.43,14.42 5.34,14.16 5.26,13.90 4.51,13.80 3.47,13.70 2.42,13.52 1.67,13.22 1.63,12.82 1.61,12.41 1.60,12.00 1.61,11.59 1.63,11.18 1.67,10.78 2.42,10.48 3.47,10.30 4.51,10.20 5.26,10.10 5.34,9.84 5.43,9.58 5.53,9.32 5.64,9.07 5.76,8.82 5.89,8.58 5.43,7.98 4.77,7.17 4.15,6.30 3.83,5.56 4.09,5.25 4.36,4.94 4.65,4.65 4.94,4.36 5.25,4.09 5.56,3.83 6.30,4.15 7.17,4.77 7.98,5.43 8.58,5.89 8.82,5.76 9.07,5.64 9.32,5.53 9.58,5.43 9.84,5.34 10.10,5.26 10.20,4.51 10.30,3.47 10.48,2.42 10.78,1.67 11.18,1.63 11.59,1.61" fill="none" stroke="#b9bfd6" stroke-width="1.8" stroke-linecap="round" stroke-linejoin="round" /><circle cx="12" cy="12" r="3.3" fill="none" stroke="#b9bfd6" stroke-width="1.8" stroke-linecap="round" stroke-linejoin="round" /></svg>
<div class="t" id="f45" style="top:1189.14px;height:40px;line-height:40px;font-size:25px;color:#d3d6df;left:196.6px;letter-spacing:0.304px;">local.properties</div>
<div class="a" style="left:142.5px;top:1248.5px;width:7px;height:7px;background:#2e3445;border-radius:4px;"></div>
<svg class="a" style="left:165px;top:1243px;" width="19" height="23" viewBox="0 0 19 23"><path d="M1.100 1.100h9.400l6.800 6.800v13.500h-16.200z" fill="none" stroke="#b9bfd6" stroke-width="1.900"/><path d="M10.500 1.100v6.800h6.800" fill="none" stroke="#b9bfd6" stroke-width="1.900"/></svg>
<div class="t" id="f46" style="top:1233.14px;height:40px;line-height:40px;font-size:25px;color:#d3d6df;left:196.6px;letter-spacing:0.393px;">oh-package-lock.json5</div>
<div class="a" style="left:142.5px;top:1292.5px;width:7px;height:7px;background:#2e3445;border-radius:4px;"></div>
<svg class="a" style="left:165px;top:1287px;" width="19" height="23" viewBox="0 0 19 23"><path d="M1.100 1.100h9.400l6.800 6.800v13.500h-16.200z" fill="none" stroke="#b9bfd6" stroke-width="1.900"/><path d="M10.500 1.100v6.800h6.800" fill="none" stroke="#b9bfd6" stroke-width="1.900"/></svg>
<div class="t" id="f47" style="top:1277.14px;height:40px;line-height:40px;font-size:25px;color:#d3d6df;left:196.6px;letter-spacing:0.252px;">oh-package.json5</div>
<div class="a" style="left:142.5px;top:1336.5px;width:7px;height:7px;background:#2e3445;border-radius:4px;"></div>
<div class="t" id="f48" style="top:1321.08px;height:40px;line-height:40px;font-size:22px;color:#e6b656;left:162.8px;letter-spacing:0.562px;-webkit-text-stroke-width:0.5px;">{ }</div>
<div class="t" id="f49" style="top:1321.14px;height:40px;line-height:40px;font-size:25px;color:#d3d6df;left:196.6px;letter-spacing:0.251px;">package-lock.json</div>
<div class="a" style="left:142.5px;top:1380.5px;width:7px;height:7px;background:#2e3445;border-radius:4px;"></div>
<div class="t" id="f50" style="top:1365.08px;height:40px;line-height:40px;font-size:22px;color:#e6b656;left:162.8px;letter-spacing:0.562px;-webkit-text-stroke-width:0.5px;">{ }</div>
<div class="t" id="f51" style="top:1365.14px;height:40px;line-height:40px;font-size:25px;color:#d3d6df;left:196.6px;letter-spacing:-0.011px;">package.json</div>
<div class="a" style="left:88px;top:1407.5px;width:588px;height:2px;background:#292e3b;"></div>
<div class="a" style="left:88px;top:1451.5px;width:588px;height:2px;background:#292e3b;"></div>
<div class="a" style="left:88px;top:1495.5px;width:588px;height:2px;background:#292e3b;"></div>
<svg class="a" style="left:101.5px;top:1421.0px;" width="17" height="17" viewBox="0 0 24 24"><polyline points="9,5 16,12 9,19" fill="none" stroke="#9398a8" stroke-width="3.7" stroke-linecap="round" stroke-linejoin="round" /></svg>
<div class="t" id="f52" style="top:1410.99px;height:40px;line-height:40px;font-size:26px;color:#d6d8e2;left:128.4px;font-weight:700;letter-spacing:-0.558px;">大纲</div>
<svg class="a" style="left:101.5px;top:1465.0px;" width="17" height="17" viewBox="0 0 24 24"><polyline points="9,5 16,12 9,19" fill="none" stroke="#9398a8" stroke-width="3.7" stroke-linecap="round" stroke-linejoin="round" /></svg>
<div class="t" id="f53" style="top:1454.99px;height:40px;line-height:40px;font-size:26px;color:#d6d8e2;left:128.4px;font-weight:700;letter-spacing:-0.272px;">时间线</div>
<svg class="a" style="left:101.5px;top:1509.0px;" width="17" height="17" viewBox="0 0 24 24"><polyline points="9,5 16,12 9,19" fill="none" stroke="#9398a8" stroke-width="3.7" stroke-linecap="round" stroke-linejoin="round" /></svg>
<div class="t" id="f54" style="top:1499.34px;height:40px;line-height:40px;font-size:25px;color:#d6d8e2;left:128.4px;font-weight:700;letter-spacing:-0.418px;">Dependencies</div>
<div class="a" style="left:905px;top:74px;width:1647px;height:79.5px;background:#17181b;border-radius:0 10px 0 0;"></div>
<div class="a" style="left:905px;top:152px;width:1647px;height:1.5px;background:#272b37;"></div>
<div class="a" style="left:1336px;top:74px;width:1.5px;height:78px;background:#272b37;"></div>
<div class="a" style="left:904.5px;top:74px;width:1.5px;height:78px;background:#20232d;"></div>
<div class="a" style="left:690px;top:74px;width:215px;height:2.2px;background:#ffffff;border-radius:2px 0 0 0;"></div>
<svg class="a" style="left:707.4px;top:101.7px;" width="24" height="24" viewBox="0 0 24 24"><polygon points="4.250,4.400 16.200,4.100 23.400,9.400 23.400,19.300 19.600,19.300 18.300,18.700 4.500,5.400" fill="#4fc0ef"/><polygon points="4,4.400 0.300,14.200 4.500,18.100 4.500,5.400" fill="#4fc0ef"/><polyline points="4,4.200 10.900,0.700 14.300,0.600 23.400,9.400" fill="none" stroke="#4fc0ef" stroke-width="1.200" stroke-linejoin="round"/><polyline points="0.500,14.500 9.300,23.300 19.100,23.300 19.100,19.300" fill="none" stroke="#3a9fe0" stroke-width="1.300" stroke-linejoin="round"/></svg>
<div class="t" id="f55" style="top:94.34px;height:40px;line-height:40px;font-size:25px;color:#ffffff;left:744.6px;letter-spacing:0.420px;">main.dart</div>
<svg class="a" style="left:866.25px;top:103.75px;" width="21.5" height="21.5" viewBox="0 0 24 24"><path d="M4 4L20 20M20 4L4 20" fill="none" stroke="#ffffff" stroke-width="2.6" stroke-linecap="butt" stroke-linejoin="miter" /></svg>
<svg class="a" style="left:930.5px;top:101.8px;" width="24" height="24" viewBox="0 0 24 24"><polygon points="4.250,4.400 16.200,4.100 23.400,9.400 23.400,19.300 19.600,19.300 18.300,18.700 4.500,5.400" fill="#4fc0ef"/><polygon points="4,4.400 0.300,14.200 4.500,18.100 4.500,5.400" fill="#4fc0ef"/><polyline points="4,4.200 10.900,0.700 14.300,0.600 23.400,9.400" fill="none" stroke="#4fc0ef" stroke-width="1.200" stroke-linejoin="round"/><polyline points="0.500,14.500 9.300,23.300 19.100,23.300 19.100,19.300" fill="none" stroke="#3a9fe0" stroke-width="1.300" stroke-linejoin="round"/></svg>
<div class="t" id="f56" style="top:94.34px;height:40px;line-height:40px;font-size:25px;color:#a2a6b4;left:966.8px;font-style:italic;letter-spacing:-0.001px;">main.dart: 变更前 <span style="font-size:33px;line-height:0">↔</span> 变更后</div>
<svg class="a" style="left:2263.0px;top:100.5px;" width="30" height="30" viewBox="0 0 24 24"><path d="M6.5 7V2.6c0-.5.5-.8 1-.6l13 6.6c.5.3.5.9 0 1.2L12.2 14" fill="none" stroke="#a9adba" stroke-width="1.4" stroke-linecap="round" stroke-linejoin="round" /><ellipse cx="6.8" cy="17.2" rx="3.4" ry="4.3" fill="none" stroke="#a9adba" stroke-width="1.4" stroke-linecap="round" stroke-linejoin="round" /><path d="M4.2 13.8a2.8 2.8 0 0 1 5.2 0" fill="none" stroke="#a9adba" stroke-width="1.4" stroke-linecap="round" stroke-linejoin="round" /><path d="M6.8 13.5v8M3.4 17.2H1M12.6 17.2h-2.4M3.8 14.6L1.6 12.8M9.8 14.6l2.2-1.8M3.9 20l-2.3 2.2M9.7 20l2.3 2.2" fill="none" stroke="#a9adba" stroke-width="1.26" stroke-linecap="round" stroke-linejoin="round" /></svg>
<svg class="a" style="left:2300.0px;top:101.5px;" width="24" height="24" viewBox="0 0 24 24"><polyline points="5,9 12,16 19,9" fill="none" stroke="#a9adba" stroke-width="1.4" stroke-linecap="round" stroke-linejoin="round" /></svg>
<svg class="a" style="left:2341px;top:97px;" width="34" height="34" viewBox="0 0 34 34"><g transform="translate(17 17)"><path d="M0 -2.200L14.5 -0.900L14.5 0.900L0 2.200z" transform="rotate(-4)" fill="#e8845a"/><path d="M0 -2.200L16.3 -0.900L16.3 0.900L0 2.200z" transform="rotate(37)" fill="#e8845a"/><path d="M0 -2.200L16.3 -0.900L16.3 0.900L0 2.200z" transform="rotate(56)" fill="#e8845a"/><path d="M0 -2.200L14.5 -0.900L14.5 0.900L0 2.200z" transform="rotate(97)" fill="#e8845a"/><path d="M0 -2.200L16.3 -0.900L16.3 0.900L0 2.200z" transform="rotate(116)" fill="#e8845a"/><path d="M0 -2.200L16.3 -0.900L16.3 0.900L0 2.200z" transform="rotate(157)" fill="#e8845a"/><path d="M0 -2.200L14.5 -0.900L14.5 0.900L0 2.200z" transform="rotate(176)" fill="#e8845a"/><path d="M0 -2.200L16.3 -0.900L16.3 0.900L0 2.200z" transform="rotate(217)" fill="#e8845a"/><path d="M0 -2.200L16.3 -0.900L16.3 0.900L0 2.200z" transform="rotate(236)" fill="#e8845a"/><path d="M0 -2.200L14.5 -0.900L14.5 0.900L0 2.200z" transform="rotate(277)" fill="#e8845a"/><path d="M0 -2.200L16.3 -0.900L16.3 0.900L0 2.200z" transform="rotate(296)" fill="#e8845a"/><path d="M0 -2.200L16.3 -0.900L16.3 0.900L0 2.200z" transform="rotate(337)" fill="#e8845a"/></g></svg>
<svg class="a" style="left:2395.5px;top:99.3px;" width="29" height="29" viewBox="0 0 24 24"><polygon points="12,0 22.500,6 22.500,18 12,24 1.500,18 1.500,6" fill="#9a9eae" stroke="#9a9eae" stroke-width="0.600" stroke-linejoin="round"/><path d="M7.700 4.300L17.300 11Q15 12.300 13.700 14L16.200 19.600L6.700 13.100Q9.500 11.800 10.500 10Z" fill="#17181b"/></svg>
<svg class="a" style="left:2450px;top:101.5px;" width="25" height="24" viewBox="0 0 25 24"><rect x="1.200" y="1.200" width="22.600" height="21.600" fill="none" stroke="#a9adba" stroke-width="2.200"/><path d="M12.500 1v22" stroke="#a9adba" stroke-width="2.200"/></svg>
<svg class="a" style="left:2500.5px;top:100.3px;" width="27" height="27" viewBox="0 0 24 24"><rect x="1.300" y="10" width="4.200" height="4.200" fill="#a9adba"/><rect x="9.900" y="10" width="4.200" height="4.200" fill="#a9adba"/><rect x="18.500" y="10" width="4.200" height="4.200" fill="#a9adba"/></svg>
<div class="t" id="f57" style="top:156.84px;height:40px;line-height:40px;font-size:25px;color:#9a9eae;left:716px;letter-spacing:0.661px;">lib</div>
<svg class="a" style="left:748.5px;top:164.5px;" width="24" height="24" viewBox="0 0 24 24"><polyline points="9,5 16,12 9,19" fill="none" stroke="#7d8294" stroke-width="1.5" stroke-linecap="round" stroke-linejoin="round" /></svg>
<svg class="a" style="left:775.3px;top:163.6px;" width="24" height="24" viewBox="0 0 24 24"><polygon points="4.250,4.400 16.200,4.100 23.400,9.400 23.400,19.300 19.600,19.300 18.300,18.700 4.500,5.400" fill="#4fc0ef"/><polygon points="4,4.400 0.300,14.200 4.500,18.100 4.500,5.400" fill="#4fc0ef"/><polyline points="4,4.200 10.900,0.700 14.300,0.600 23.400,9.400" fill="none" stroke="#4fc0ef" stroke-width="1.200" stroke-linejoin="round"/><polyline points="0.500,14.500 9.300,23.300 19.100,23.300 19.100,19.300" fill="none" stroke="#3a9fe0" stroke-width="1.300" stroke-linejoin="round"/></svg>
<div class="t" id="f58" style="top:156.84px;height:40px;line-height:40px;font-size:25px;color:#9a9eae;left:809px;letter-spacing:0.309px;">main.dart</div>
<svg class="a" style="left:921.0px;top:164.5px;" width="24" height="24" viewBox="0 0 24 24"><polyline points="9,5 16,12 9,19" fill="none" stroke="#7d8294" stroke-width="1.5" stroke-linecap="round" stroke-linejoin="round" /></svg>
<svg class="a" style="left:948.3px;top:166.6px;" width="23.5" height="23.5" viewBox="0 0 16 16"><path fill="#ee9d28" d="M11.34 9.710h.710l2.670-2.670v-.710L13.380 5h-.700l-1.820 1.810h-5V5.560l1.860-1.850V3l-2-2H5L1 5v.710l2 2h.710l1.140-1.150v5.790l.500.500H10v.520l1.330 1.340h.710l2.670-2.670v-.710L13.370 10h-.700l-1.860 1.850h-5v-4H10v.480l1.340 1.380zm1.690-3.650l.630.630-2 2-.630-.630 2-2zm0 5l.630.630-2 2-.630-.630 2-2zM3.350 6.650l-1.290-1.300 3.290-3.290 1.300 1.290-3.300 3.300z"/></svg>
<div class="t" id="f59" style="top:156.84px;height:40px;line-height:40px;font-size:25px;color:#9a9eae;left:980.7px;letter-spacing:-0.227px;">_WeatherCardScreenState</div>
<svg class="a" style="left:1280.0px;top:164.5px;" width="24" height="24" viewBox="0 0 24 24"><polyline points="9,5 16,12 9,19" fill="none" stroke="#7d8294" stroke-width="1.5" stroke-linecap="round" stroke-linejoin="round" /></svg>
<div class="a" style="left:1307.500px;top:166px;width:20px;height:20px;border:2px solid #c678dd;border-radius:50%;"></div>
<div class="t" style="top:157.07px;height:40px;line-height:40px;font-size:20px;color:#c678dd;left:1315.5px;font-weight:700;">f</div>
<div class="t" id="f60" style="top:156.84px;height:40px;line-height:40px;font-size:25px;color:#9a9eae;left:1340px;letter-spacing:0.534px;">build</div>
<div class="c" style="left:684px;top:200px;width:1836px;height:1112px;">
<div class="t" style="right:1747px;top:17.07px;height:40px;line-height:40px;font-size:26px;color:#9498a6;font-family:'Liberation Mono','Noto Sans CJK SC',monospace;">1</div>
<div class="t" style="left:142.20000000000005px;top:17.07px;height:40px;line-height:40px;font-size:26px;font-family:'Liberation Mono','Noto Sans CJK SC',monospace;-webkit-text-stroke-width:0.35px;"><span style="color:#b792f5">import</span><span style="color:#cdd1dc"> </span><span style="color:#6fdc8c">'package:flutter/material.dart'</span><span style="color:#cdd1dc">;</span></div>
<div class="t" style="right:1747px;top:61.07px;height:40px;line-height:40px;font-size:26px;color:#9498a6;font-family:'Liberation Mono','Noto Sans CJK SC',monospace;">2</div>
<div class="t" style="right:1747px;top:141.07px;height:40px;line-height:40px;font-size:26px;color:#9498a6;font-family:'Liberation Mono','Noto Sans CJK SC',monospace;">3</div>
<div class="t" style="left:142.20000000000005px;top:141.07px;height:40px;line-height:40px;font-size:26px;font-family:'Liberation Mono','Noto Sans CJK SC',monospace;-webkit-text-stroke-width:0.35px;"><span style="color:#b792f5">void</span><span style="color:#cdd1dc"> </span><span style="color:#ff9a6c">main</span><span style="color:#ffd700">()</span><span style="color:#cdd1dc"> </span><span style="color:#ffd700">{</span></div>
<div class="t" style="right:1747px;top:185.07px;height:40px;line-height:40px;font-size:26px;color:#9498a6;font-family:'Liberation Mono','Noto Sans CJK SC',monospace;">4</div>
<div class="t" style="left:142.20000000000005px;top:185.07px;height:40px;line-height:40px;font-size:26px;font-family:'Liberation Mono','Noto Sans CJK SC',monospace;-webkit-text-stroke-width:0.35px;"><span style="color:#cdd1dc">  </span><span style="color:#ff9a6c">runApp</span><span style="color:#da70d6">(</span><span style="color:#b792f5">const</span><span style="color:#cdd1dc"> </span><span style="color:#7fd3ed">WeatherCardApp</span><span style="color:#179fff">()</span><span style="color:#da70d6">)</span><span style="color:#cdd1dc">;</span></div>
<div class="t" style="right:1747px;top:229.07px;height:40px;line-height:40px;font-size:26px;color:#9498a6;font-family:'Liberation Mono','Noto Sans CJK SC',monospace;">5</div>
<div class="t" style="left:142.20000000000005px;top:229.07px;height:40px;line-height:40px;font-size:26px;font-family:'Liberation Mono','Noto Sans CJK SC',monospace;-webkit-text-stroke-width:0.35px;"><span style="color:#ffd700">}</span></div>
<div class="t" style="right:1747px;top:273.07px;height:40px;line-height:40px;font-size:26px;color:#9498a6;font-family:'Liberation Mono','Noto Sans CJK SC',monospace;">6</div>
<div class="t" style="right:1747px;top:317.07px;height:40px;line-height:40px;font-size:26px;color:#9498a6;font-family:'Liberation Mono','Noto Sans CJK SC',monospace;">7</div>
<div class="t" style="left:142.20000000000005px;top:317.07px;height:40px;line-height:40px;font-size:26px;font-family:'Liberation Mono','Noto Sans CJK SC',monospace;-webkit-text-stroke-width:0.35px;"><span style="color:#b792f5">class</span><span style="color:#cdd1dc"> </span><span style="color:#7fd3ed">WeatherCardApp</span><span style="color:#cdd1dc"> </span><span style="color:#b792f5">extends</span><span style="color:#cdd1dc"> </span><span style="color:#7fd3ed">StatelessWidget</span><span style="color:#cdd1dc"> </span><span style="color:#ffd700">{</span></div>
<div class="t" style="right:1747px;top:361.07px;height:40px;line-height:40px;font-size:26px;color:#9498a6;font-family:'Liberation Mono','Noto Sans CJK SC',monospace;">8</div>
<div class="t" style="left:142.20000000000005px;top:361.07px;height:40px;line-height:40px;font-size:26px;font-family:'Liberation Mono','Noto Sans CJK SC',monospace;-webkit-text-stroke-width:0.35px;"><span style="color:#cdd1dc">  </span><span style="color:#b792f5">const</span><span style="color:#cdd1dc"> </span><span style="color:#7fd3ed">WeatherCardApp</span><span style="color:#da70d6">(</span><span style="color:#179fff">{</span><span style="color:#b792f5">super</span><span style="color:#cdd1dc">.</span><span style="color:#ecd286">key</span><span style="color:#179fff">}</span><span style="color:#da70d6">)</span><span style="color:#cdd1dc">;</span></div>
<div class="t" style="right:1747px;top:405.07px;height:40px;line-height:40px;font-size:26px;color:#9498a6;font-family:'Liberation Mono','Noto Sans CJK SC',monospace;">9</div>
<div class="t" style="right:1747px;top:449.07px;height:40px;line-height:40px;font-size:26px;color:#9498a6;font-family:'Liberation Mono','Noto Sans CJK SC',monospace;">10</div>
<div class="t" style="left:142.20000000000005px;top:449.07px;height:40px;line-height:40px;font-size:26px;font-family:'Liberation Mono','Noto Sans CJK SC',monospace;-webkit-text-stroke-width:0.35px;"><span style="color:#cdd1dc">  </span><span style="color:#ecd286">@</span><span style="color:#e8eaf0">override</span></div>
<div class="t" style="right:1747px;top:529.07px;height:40px;line-height:40px;font-size:26px;color:#9498a6;font-family:'Liberation Mono','Noto Sans CJK SC',monospace;">11</div>
<div class="t" style="left:142.20000000000005px;top:529.07px;height:40px;line-height:40px;font-size:26px;font-family:'Liberation Mono','Noto Sans CJK SC',monospace;-webkit-text-stroke-width:0.35px;"><span style="color:#cdd1dc">  </span><span style="color:#7fd3ed">Widget</span><span style="color:#cdd1dc"> </span><span style="color:#ff9a6c">build</span><span style="color:#da70d6">(</span><span style="color:#7fd3ed">BuildContext</span><span style="color:#cdd1dc"> </span><span style="color:#ecd286">context</span><span style="color:#da70d6">)</span><span style="color:#cdd1dc"> </span><span style="color:#da70d6">{</span></div>
<div class="t" style="right:1747px;top:573.07px;height:40px;line-height:40px;font-size:26px;color:#9498a6;font-family:'Liberation Mono','Noto Sans CJK SC',monospace;">12</div>
<div class="t" style="left:142.20000000000005px;top:573.07px;height:40px;line-height:40px;font-size:26px;font-family:'Liberation Mono','Noto Sans CJK SC',monospace;-webkit-text-stroke-width:0.35px;"><span style="color:#cdd1dc">    </span><span style="color:#b792f5">return</span><span style="color:#cdd1dc"> </span><span style="color:#7fd3ed">MaterialApp</span><span style="color:#179fff">(</span></div>
<div class="t" style="right:1747px;top:617.07px;height:40px;line-height:40px;font-size:26px;color:#9498a6;font-family:'Liberation Mono','Noto Sans CJK SC',monospace;">13</div>
<div class="t" style="left:142.20000000000005px;top:617.07px;height:40px;line-height:40px;font-size:26px;font-family:'Liberation Mono','Noto Sans CJK SC',monospace;-webkit-text-stroke-width:0.35px;"><span style="color:#cdd1dc">      </span><span style="color:#ecd286">debugShowCheckedModeBanner</span><span style="color:#cdd1dc">:</span><span style="color:#cdd1dc"> </span><span style="color:#6fb4f7">false</span><span style="color:#cdd1dc">,</span></div>
<div class="t" style="right:1747px;top:661.07px;height:40px;line-height:40px;font-size:26px;color:#9498a6;font-family:'Liberation Mono','Noto Sans CJK SC',monospace;">14</div>
<div class="t" style="left:142.20000000000005px;top:661.07px;height:40px;line-height:40px;font-size:26px;font-family:'Liberation Mono','Noto Sans CJK SC',monospace;-webkit-text-stroke-width:0.35px;"><span style="color:#cdd1dc">      </span><span style="color:#ecd286">title</span><span style="color:#cdd1dc">:</span><span style="color:#cdd1dc"> </span><span style="color:#6fdc8c">'</span></div>
<div class="t" style="right:1747px;top:705.07px;height:40px;line-height:40px;font-size:26px;color:#9498a6;font-family:'Liberation Mono','Noto Sans CJK SC',monospace;">15</div>
<div class="t" style="left:142.20000000000005px;top:705.07px;height:40px;line-height:40px;font-size:26px;font-family:'Liberation Mono','Noto Sans CJK SC',monospace;-webkit-text-stroke-width:0.35px;"><span style="color:#cdd1dc">      </span><span style="color:#ecd286">theme</span><span style="color:#cdd1dc">:</span><span style="color:#cdd1dc"> </span><span style="color:#7fd3ed">ThemeData</span><span style="color:#ffd700">(</span></div>
<div class="t" style="right:1747px;top:749.07px;height:40px;line-height:40px;font-size:26px;color:#9498a6;font-family:'Liberation Mono','Noto Sans CJK SC',monospace;">16</div>
<div class="t" style="left:142.20000000000005px;top:749.07px;height:40px;line-height:40px;font-size:26px;font-family:'Liberation Mono','Noto Sans CJK SC',monospace;-webkit-text-stroke-width:0.35px;"><span style="color:#cdd1dc">        </span><span style="color:#ecd286">brightness</span><span style="color:#cdd1dc">:</span><span style="color:#cdd1dc"> </span><span style="color:#7fd3ed">Brightness</span><span style="color:#cdd1dc">.</span><span style="color:#6fb4f7">light</span><span style="color:#cdd1dc">,</span></div>
<div class="t" style="right:1747px;top:793.07px;height:40px;line-height:40px;font-size:26px;color:#9498a6;font-family:'Liberation Mono','Noto Sans CJK SC',monospace;">17</div>
<div class="t" style="left:142.20000000000005px;top:793.07px;height:40px;line-height:40px;font-size:26px;font-family:'Liberation Mono','Noto Sans CJK SC',monospace;-webkit-text-stroke-width:0.35px;"><span style="color:#cdd1dc">        </span><span style="color:#ecd286">primarySwatch</span><span style="color:#cdd1dc">:</span><span style="color:#cdd1dc"> </span><span style="display:inline-block;width:31.2px;height:1px;position:relative;"><span style="position:absolute;left:4.500px;top:-21px;width:17px;height:17px;border:2px solid #e8eaf0;background:#2196f3;"></span></span><span style="color:#7fd3ed">Colors</span><span style="color:#cdd1dc">.</span><span style="color:#e8eaf0">blue</span><span style="color:#cdd1dc">,</span></div>
<div class="t" style="right:1747px;top:837.07px;height:40px;line-height:40px;font-size:26px;color:#9498a6;font-family:'Liberation Mono','Noto Sans CJK SC',monospace;">18</div>
<div class="t" style="left:142.20000000000005px;top:837.07px;height:40px;line-height:40px;font-size:26px;font-family:'Liberation Mono','Noto Sans CJK SC',monospace;-webkit-text-stroke-width:0.35px;"><span style="color:#cdd1dc">        </span><span style="color:#ecd286">scaffoldBackgroundColor</span><span style="color:#cdd1dc">:</span><span style="color:#cdd1dc"> </span><span style="display:inline-block;width:31.2px;height:1px;position:relative;"><span style="position:absolute;left:4.500px;top:-21px;width:17px;height:17px;border:2px solid #e8eaf0;background:#e6f4ff;"></span></span><span style="color:#b792f5">const</span><span style="color:#cdd1dc"> </span><span style="color:#7fd3ed">Color</span><span style="color:#da70d6">(</span><span style="color:#ff7eb6">0xFFE6F4FF</span><span style="color:#da70d6">)</span><span style="color:#cdd1dc">,</span></div>
<div class="t" style="right:1747px;top:881.07px;height:40px;line-height:40px;font-size:26px;color:#9498a6;font-family:'Liberation Mono','Noto Sans CJK SC',monospace;">19</div>
<div class="t" style="left:142.20000000000005px;top:881.07px;height:40px;line-height:40px;font-size:26px;font-family:'Liberation Mono','Noto Sans CJK SC',monospace;-webkit-text-stroke-width:0.35px;"><span style="color:#cdd1dc">        </span><span style="color:#ecd286">appBarTheme</span><span style="color:#cdd1dc">:</span><span style="color:#cdd1dc"> </span><span style="color:#b792f5">const</span><span style="color:#cdd1dc"> </span><span style="color:#7fd3ed">AppBarTheme</span><span style="color:#da70d6">(</span></div>
<div class="t" style="right:1747px;top:925.07px;height:40px;line-height:40px;font-size:26px;color:#9498a6;font-family:'Liberation Mono','Noto Sans CJK SC',monospace;">20</div>
<div class="t" style="left:142.20000000000005px;top:925.07px;height:40px;line-height:40px;font-size:26px;font-family:'Liberation Mono','Noto Sans CJK SC',monospace;-webkit-text-stroke-width:0.35px;"><span style="color:#cdd1dc">          </span><span style="color:#ecd286">backgroundColor</span><span style="color:#cdd1dc">:</span><span style="color:#cdd1dc"> </span><span style="display:inline-block;width:31.2px;height:1px;position:relative;"><span style="position:absolute;left:4.500px;top:-21px;width:17px;height:17px;border:2px solid #e8eaf0;background:transparent;"></span></span><span style="color:#7fd3ed">Colors</span><span style="color:#cdd1dc">.</span><span style="color:#e8eaf0">transparent</span><span style="color:#cdd1dc">,</span></div>
<div class="t" style="right:1747px;top:969.07px;height:40px;line-height:40px;font-size:26px;color:#9498a6;font-family:'Liberation Mono','Noto Sans CJK SC',monospace;">21</div>
<div class="t" style="left:142.20000000000005px;top:969.07px;height:40px;line-height:40px;font-size:26px;font-family:'Liberation Mono','Noto Sans CJK SC',monospace;-webkit-text-stroke-width:0.35px;"><span style="color:#cdd1dc">          </span><span style="color:#ecd286">foregroundColor</span><span style="color:#cdd1dc">:</span><span style="color:#cdd1dc"> </span><span style="display:inline-block;width:31.2px;height:1px;position:relative;"><span style="position:absolute;left:4.500px;top:-21px;width:17px;height:17px;border:2px solid #e8eaf0;background:#2196f3;"></span></span><span style="color:#7fd3ed">Colors</span><span style="color:#cdd1dc">.</span><span style="color:#e8eaf0">blue</span><span style="color:#cdd1dc">,</span></div>
<div class="t" style="right:1747px;top:1013.07px;height:40px;line-height:40px;font-size:26px;color:#9498a6;font-family:'Liberation Mono','Noto Sans CJK SC',monospace;">22</div>
<div class="t" style="left:142.20000000000005px;top:1013.07px;height:40px;line-height:40px;font-size:26px;font-family:'Liberation Mono','Noto Sans CJK SC',monospace;-webkit-text-stroke-width:0.35px;"><span style="color:#cdd1dc">          </span><span style="color:#ecd286">elevation</span><span style="color:#cdd1dc">:</span><span style="color:#cdd1dc"> </span><span style="color:#ff7eb6">0</span><span style="color:#cdd1dc">,</span></div>
<div class="t" style="right:1747px;top:1057.07px;height:40px;line-height:40px;font-size:26px;color:#9498a6;font-family:'Liberation Mono','Noto Sans CJK SC',monospace;">23</div>
<div class="t" style="left:142.20000000000005px;top:1057.07px;height:40px;line-height:40px;font-size:26px;font-family:'Liberation Mono','Noto Sans CJK SC',monospace;-webkit-text-stroke-width:0.35px;"><span style="color:#cdd1dc">        </span><span style="color:#da70d6">)</span><span style="color:#cdd1dc">,</span><span style="color:#cdd1dc"> </span><span style="color:#7d8291;padding-left:3px">// AppBarTheme</span></div>
<div class="t" style="right:1747px;top:1101.07px;height:40px;line-height:40px;font-size:26px;color:#9498a6;font-family:'Liberation Mono','Noto Sans CJK SC',monospace;">24</div>
<div class="t" style="left:142.20000000000005px;top:1101.07px;height:40px;line-height:40px;font-size:26px;font-family:'Liberation Mono','Noto Sans CJK SC',monospace;-webkit-text-stroke-width:0.35px;"><span style="color:#cdd1dc">      </span><span style="color:#ffd700">)</span><span style="color:#cdd1dc">,</span><span style="color:#cdd1dc"> </span><span style="color:#7d8291;padding-left:3px">// ThemeData</span></div>
<svg class="a" style="left:365px;top:668px" width="28" height="27" viewBox="0 0 28 27"><defs><radialGradient id="e14" cx="45%" cy="35%" r="70%"><stop offset="0" stop-color="#ffd84a"/><stop offset="1" stop-color="#f7a51e"/></radialGradient><linearGradient id="c14" x1="0" y1="0" x2="0" y2="1"><stop offset="0" stop-color="#ffffff"/><stop offset="1" stop-color="#d6d3ec"/></linearGradient></defs><circle cx="21.30" cy="11.90" r="2.300" fill="#f4932a"/><circle cx="20.01" cy="16.70" r="2.300" fill="#f4932a"/><circle cx="16.50" cy="20.21" r="2.300" fill="#f4932a"/><circle cx="11.70" cy="21.50" r="2.300" fill="#f4932a"/><circle cx="6.90" cy="20.21" r="2.300" fill="#f4932a"/><circle cx="3.39" cy="16.70" r="2.300" fill="#f4932a"/><circle cx="2.10" cy="11.90" r="2.300" fill="#f4932a"/><circle cx="3.39" cy="7.10" r="2.300" fill="#f4932a"/><circle cx="6.90" cy="3.59" r="2.300" fill="#f4932a"/><circle cx="11.70" cy="2.30" r="2.300" fill="#f4932a"/><circle cx="16.50" cy="3.59" r="2.300" fill="#f4932a"/><circle cx="20.01" cy="7.10" r="2.300" fill="#f4932a"/><circle cx="11.700" cy="11.900" r="9.600" fill="url(#e14)"/><path d="M11.500 25.800h9.800a4.600 4.600 0 0 0 .6-9.100 5.400 5.400 0 0 0-10-.7A5 5 0 0 0 11.500 25.800z" fill="url(#c14)"/></svg>
<div class="t" id="f_cjk14" style="left:412.5px;top:659.57px;height:40px;line-height:40px;font-size:26px;font-family:'Noto Serif CJK SC',serif;color:#6fdc8c;letter-spacing:-0.500px;">天气卡片</div>
<div class="t" style="left:516.5999999999999px;top:662.07px;height:40px;line-height:40px;font-size:26px;font-family:'Liberation Mono','Noto Sans CJK SC',monospace;"><span style="color:#6fdc8c">'</span><span style="color:#cdd1dc">,</span></div>
<div class="t" id="f61" style="left:142px;top:102.38px;height:40px;line-height:40px;font-size:22px;color:#8e8f96;letter-spacing:-0.124px;">Run | Debug | Profile | 解释代码 | 生成文档 | 修复代码 | 生成测试 | 代码评审 | 关闭</div>
<div class="t" id="f62" style="left:174px;top:490.38px;height:40px;line-height:40px;font-size:22px;color:#8e8f96;letter-spacing:-0.073px;">解释代码 | 生成文档 | 修复代码 | 生成测试 | 代码评审 | 关闭</div>
<div class="a" style="left:142.2px;top:182px;width:1.500px;height:44px;background:#292d3a;"></div>
<div class="a" style="left:142.2px;top:358px;width:1.500px;height:784px;background:#292d3a;"></div>
<div class="a" style="left:173.4px;top:570px;width:1.500px;height:572px;background:#292d3a;"></div>
<div class="a" style="left:204.6px;top:614px;width:1.500px;height:528px;background:#292d3a;"></div>
<div class="a" style="left:235.8px;top:746px;width:1.500px;height:352px;background:#292d3a;"></div>
<div class="a" style="left:267.0px;top:922px;width:1.500px;height:132px;background:#292d3a;"></div>
<div class="a" style="left:588px;top:585.5px;width:16px;height:16px;border-radius:50%;background:#22e8f5;"></div>
</div>
<div class="a" style="left:2520px;top:198px;width:1px;height:1114px;background:#2b2f3b;"></div>
<div class="a" style="left:2520px;top:198px;width:24px;height:1px;background:#2b2f3b;"></div>
<div class="a" style="left:2526px;top:198px;width:14px;height:74px;background:#3e414b;border-radius:7px;"></div>
<div class="a" style="left:2536.5px;top:843px;width:7.5px;height:12px;background:#4d9df5;"></div>
<div class="a" style="left:2536.5px;top:901px;width:7.5px;height:12px;background:#4d9df5;"></div>
<div class="a" style="left:2536.5px;top:967.5px;width:7.5px;height:12px;background:#4d9df5;"></div>
<div class="a" style="left:2536.5px;top:1098px;width:7.5px;height:12px;background:#4d9df5;"></div>
<div class="a" style="left:2536.5px;top:1189px;width:7.5px;height:12px;background:#4d9df5;"></div>
<div class="a" style="left:2521.5px;top:1013px;width:22.5px;height:4px;background:#a9adba;"></div>
<div class="a" style="left:2074.3px;top:198px;width:1.6px;height:37px;background:#5b5d63;"></div>
<div class="a" style="left:2074px;top:1299px;width:1.6px;height:13px;background:#5b5d63;"></div>
<div class="a" style="left:2353px;top:393px;width:2.5px;height:139px;background:#34353b;border-radius:2px;"></div>
<div class="a" style="left:2353px;top:590px;width:2.5px;height:62px;background:#34353b;border-radius:2px;"></div>
<div class="a" style="left:1858.5px;top:424px;width:3px;height:5px;background:#2e2f33;border-radius:1px;"></div>
<div class="a" style="left:1858.5px;top:543px;width:3px;height:5px;background:#2e2f33;border-radius:1px;"></div>
<div class="a" style="left:1860.5px;top:235px;width:493px;height:1064.5px;border-radius:56px;background:linear-gradient(to bottom,#4a4a4c 0%,#343436 2%,#38383a 69.6%,#c9c1b1 70%,#c9c1b1 100%);"></div>
<div class="a" style="left:1864.0px;top:238.5px;width:486px;height:1057.5px;border-radius:53px;background:linear-gradient(to bottom,#8e8e90 0%,#bdbdbf 2%,#dcdcde 30%,#e4e4e6 69.6%,#f7f3ea 70%,#ffffff 98%,#4a4a48 99.400%,#d8d8d8 99.750%,#f6f3ea 100%);box-shadow:inset 0 0 0 1.400px #161616;"></div>
<div class="a" style="left:1868.0px;top:248px;width:478.5px;height:1042.0px;border-radius:42px;background:#000;"></div>
<div class="c" style="left:1869px;top:254px;width:477.5px;height:1029.5px;border-radius:44px;background:linear-gradient(to bottom,#f8f6e9 0%,#faf6e6 45%,#fff7e0 100%);">
<div class="a" style="left:0px;top:0px;width:477.5px;height:119.5px;background:#e6f4ff;"></div>
<div class="a" style="left:186.5px;top:14.9px;width:27.6px;height:27.6px;background:#020203;border-radius:14px;"></div>
<div class="a" style="left:224.5px;top:14.9px;width:27.6px;height:27.6px;background:#020203;border-radius:14px;"></div>
<div class="a" style="left:262.7px;top:14.9px;width:27.6px;height:27.6px;background:#020203;border-radius:14px;"></div>
<div class="a" style="left:199.3px;top:25.3px;width:6.4px;height:6.4px;background:radial-gradient(circle at 60% 40%,#3a5a9a 0%,#16254a 50%,#05070f 100%);border-radius:4px;"></div>
<div class="a" style="left:271.1px;top:25.3px;width:6.4px;height:6.4px;background:radial-gradient(circle at 60% 40%,#3a5a9a 0%,#16254a 50%,#05070f 100%);border-radius:4px;"></div>
</div>
<div class="t" id="f63" style="top:263.22px;height:40px;line-height:40px;font-size:19px;color:#ffffff;left:1889.7px;letter-spacing:0.011px;">05:15</div>
<svg class="a" style="left:2182px;top:273.7px;" width="17" height="18" viewBox="0 0 17 18"><path d="M8 1a8 8 0 1 0 8.500 10.500A7.500 7.500 0 0 1 8 1z" fill="#fff"/></svg>
<svg class="a" style="left:2204px;top:274.2px;" width="26" height="17" viewBox="0 0 26 17"><path d="M7 2L1.500 8.500 7 15M19 2l5.500 6.500L19 15" fill="none" stroke="#fff" stroke-width="1.800"/><path d="M8.500 8.500h2M12 8.500h2M15.500 8.500h2" stroke="#fff" stroke-width="1.800"/></svg>
<svg class="a" style="left:2236.5px;top:273.7px;" width="20" height="17" viewBox="0 0 20 17"><path d="M1 6.500a13 13 0 0 1 18 0M3.800 9.800a9 9 0 0 1 12.400 0M6.600 13a5 5 0 0 1 6.800 0" fill="none" stroke="#fff" stroke-width="1.900"/><circle cx="10" cy="15.300" r="1.500" fill="#fff"/></svg>
<svg class="a" style="left:2261px;top:272.7px;" width="24" height="18" viewBox="0 0 24 18"><path d="M1 1l4 4M5 1L1 5" stroke="#fff" stroke-width="1.500"/><rect x="4" y="13" width="2.200" height="4" fill="#fdfeff"/><rect x="8.500" y="10.500" width="2.200" height="6.500" fill="#f6fbff"/><rect x="13" y="8" width="2.200" height="9" fill="#f6fbff"/><rect x="17.500" y="5" width="2.200" height="12" fill="#f6fbff"/></svg>
<svg class="a" style="left:2290.5px;top:273.7px;" width="33" height="18" viewBox="0 0 33 18"><rect x="1" y="1" width="28" height="16" rx="4.500" fill="none" stroke="#fff" stroke-width="1.600"/><rect x="30" y="6" width="2.200" height="6" rx="1" fill="#fff"/></svg>
<div class="t" id="f64" style="top:263.20px;height:40px;line-height:40px;font-size:15px;color:#ffffff;left:2294.5px;font-weight:700;letter-spacing:-1.010px;">100</div>
<div class="t" id="f65" style="top:318.10px;height:40px;line-height:40px;font-size:28px;color:#2196f3;left:2050.9px;font-weight:700;letter-spacing:-0.004px;">今日天气</div>
<div class="t" id="f66" style="top:387.51px;height:40px;line-height:40px;font-size:45px;color:#5d4037;left:2060.6px;font-weight:700;letter-spacing:0.492px;text-shadow:0 2px 4px rgba(93,64,55,.18);">杭州</div>
<div class="t" id="f67" style="top:490.72px;height:40px;line-height:40px;font-size:34px;color:#6d4c41;left:2132.9px;font-weight:500;letter-spacing:0.400px;">晴朗</div>
<div class="t" id="f68" style="top:622.34px;height:40px;line-height:40px;font-size:103.5px;color:#5d4037;left:2029px;font-weight:700;letter-spacing:4.438px;">28</div>
<div class="t" style="top:610.04px;height:40px;line-height:40px;font-size:111px;color:#5d4037;left:2146px;font-weight:700;height:120px;line-height:120px;margin-top:-40px;">°</div>
<div class="t" id="f69" style="top:705.17px;height:40px;line-height:40px;font-size:20px;color:#8d7b73;left:2046.2px;letter-spacing:0.300px;">湿度</div>
<div class="t" id="f70" style="top:705.17px;height:40px;line-height:40px;font-size:20px;color:#8d7b73;left:2153.0px;letter-spacing:0.900px;">风速</div>
<div class="t" id="f71" style="top:737.01px;height:40px;line-height:40px;font-size:24.5px;color:#5d4037;left:2024.7px;font-weight:700;letter-spacing:1.318px;">60%</div>
<div class="t" id="f72" style="top:737.01px;height:40px;line-height:40px;font-size:24.5px;color:#5d4037;left:2117.3px;font-weight:700;letter-spacing:1.036px;">2.3m/s</div>
<svg class="a" style="left:2016px;top:465px;" width="90" height="90" viewBox="0 0 90 90"><defs><radialGradient id="sg" cx="45%" cy="40%" r="60%"><stop offset="0" stop-color="#ffe27a"/><stop offset="0.55" stop-color="#ffc83d"/><stop offset="1" stop-color="#f9a71e"/></radialGradient></defs><path d="M45 3.500v9" stroke="#fbbf3c" stroke-width="6.800" stroke-linecap="round" transform="rotate(0 45 45)"/><path d="M45 3.500v9" stroke="#fbbf3c" stroke-width="6.800" stroke-linecap="round" transform="rotate(45 45 45)"/><path d="M45 3.500v9" stroke="#fbbf3c" stroke-width="6.800" stroke-linecap="round" transform="rotate(90 45 45)"/><path d="M45 3.500v9" stroke="#fbbf3c" stroke-width="6.800" stroke-linecap="round" transform="rotate(135 45 45)"/><path d="M45 3.500v9" stroke="#fbbf3c" stroke-width="6.800" stroke-linecap="round" transform="rotate(180 45 45)"/><path d="M45 3.500v9" stroke="#fbbf3c" stroke-width="6.800" stroke-linecap="round" transform="rotate(225 45 45)"/><path d="M45 3.500v9" stroke="#fbbf3c" stroke-width="6.800" stroke-linecap="round" transform="rotate(270 45 45)"/><path d="M45 3.500v9" stroke="#fbbf3c" stroke-width="6.800" stroke-linecap="round" transform="rotate(315 45 45)"/><circle cx="45" cy="45" r="24.500" fill="url(#sg)"/></svg>
<svg class="a" style="left:2019.5px;top:713px;" width="16" height="24" viewBox="0 0 16 24"><defs><linearGradient id="dg" x1="0" y1="0" x2="0" y2="1"><stop offset="0" stop-color="#9fe0ff"/><stop offset="1" stop-color="#2f9df0"/></linearGradient></defs><path d="M8 1C10.500 7 15 11 15 16a7 7 0 0 1-14 0C1 11 5.500 7 8 1z" fill="url(#dg)"/></svg>
<svg class="a" style="left:2123px;top:714px;" width="24" height="22" viewBox="0 0 24 22"><circle cx="14" cy="8" r="6" fill="#e4e4e8"/><circle cx="17.500" cy="13" r="5.500" fill="#d9d9df"/><circle cx="11" cy="14.500" r="5.500" fill="#ececf0"/><circle cx="9" cy="8.500" r="4.500" fill="#efeff3"/><path d="M1 8h5M0.500 12h4M2 16h4" stroke="#c9c9d2" stroke-width="1.600" stroke-linecap="round"/></svg>
<div class="a" style="left:2071.500px;top:1158px;width:71px;height:71px;border-radius:23px;background:#fff;box-shadow:0 5px 12px rgba(120,100,40,.28),0 1px 3px rgba(0,0,0,.12);"></div>
<svg class="a" style="left:2099px;top:1181px;" width="16" height="25" viewBox="0 0 16 25"><path d="M3 2.500l10.500 10L3 22.500" fill="none" stroke="#2196f3" stroke-width="4" stroke-linejoin="miter"/></svg>
<div class="a" style="left:2051px;top:1243.3px;width:10px;height:10px;background:#ffffff;border-radius:5px;"></div>
<div class="a" style="left:2071.5px;top:1243.3px;width:10px;height:10px;background:rgba(255,255,255,.55);border-radius:5px;"></div>
<div class="a" style="left:2091.8px;top:1243.3px;width:10px;height:10px;background:rgba(255,255,255,.55);border-radius:5px;"></div>
<div class="a" style="left:2112px;top:1243.3px;width:10px;height:10px;background:rgba(255,255,255,.55);border-radius:5px;"></div>
<div class="a" style="left:2132px;top:1243.3px;width:10px;height:10px;background:rgba(255,255,255,.55);border-radius:5px;"></div>
<div class="a" style="left:2152.4px;top:1243.3px;width:10px;height:10px;background:rgba(255,255,255,.55);border-radius:5px;"></div>
<div class="a" style="left:2036px;top:1269.8px;width:141px;height:6.5px;background:#b8b19b;border-radius:4px;"></div>
<div class="a" style="left:2379px;top:490.500px;width:48px;height:553.500px;border-radius:8px;background:#ffffff;box-shadow:0 0 16px rgba(150,160,190,.26);"></div>
<div class="a" style="left:2387px;top:505.4px;width:7px;height:1.5px;background:#222428;"></div>
<svg class="a" style="left:2409.5px;top:501px;" width="10" height="10" viewBox="0 0 10 10"><path d="M0.500 0.500l9 9M9.500 0.500l-9 9" stroke="#222428" stroke-width="1.400"/></svg>
<svg class="a" style="left:2395px;top:534.5px;" width="16" height="15" viewBox="0 0 16 15"><path d="M0 1.500h16M0 7.500h16M0 13.500h16" stroke="#222428" stroke-width="1.500"/></svg>
<div class="a" style="left:2387px;top:562.2px;width:32px;height:1px;background:#dcdde2;"></div>
<svg class="a" style="left:2392.0px;top:571.8px;" width="22" height="22" viewBox="0 0 24 24"><path d="M3.500 2.500h17M12 21.500V7M6 12.500l6-6 6 6" fill="none" stroke="#222428" stroke-width="1.5" stroke-linecap="butt" stroke-linejoin="miter" /></svg>
<svg class="a" style="left:2393.0px;top:613.0px;" width="20" height="20" viewBox="0 0 24 24"><path d="M6.500 2v15.500H22M2 6.500h15.500V22" fill="none" stroke="#222428" stroke-width="1.7" stroke-linecap="butt" stroke-linejoin="miter" /></svg>
<svg class="a" style="left:2392.0px;top:651.8px;" width="22" height="22" viewBox="0 0 24 24"><path d="M5.500 5.500A9 9 0 1 1 3 12" fill="none" stroke="#222428" stroke-width="1.5" stroke-linecap="round" stroke-linejoin="round" /><path d="M5.500 1.500v4.500h4.500" fill="none" stroke="#222428" stroke-width="1.5" stroke-linecap="round" stroke-linejoin="round" /><rect x="8.500" y="8.500" width="7" height="7" rx="1.500" fill="none" stroke="#222428" stroke-width="1.5" stroke-linecap="round" stroke-linejoin="round" /></svg>
<svg class="a" style="left:2392.0px;top:692.0px;" width="22" height="22" viewBox="0 0 24 24"><path d="M19 17.500A9 9 0 1 1 21 12" fill="none" stroke="#222428" stroke-width="1.5" stroke-linecap="round" stroke-linejoin="round" /><path d="M21 7.500V12h-4.500" fill="none" stroke="#222428" stroke-width="1.5" stroke-linecap="round" stroke-linejoin="round" /><rect x="8.500" y="8.500" width="7" height="7" rx="1.500" fill="none" stroke="#222428" stroke-width="1.5" stroke-linecap="round" stroke-linejoin="round" /></svg>
<svg class="a" style="left:2392.0px;top:732.0px;" width="22" height="22" viewBox="0 0 24 24"><path d="M2 9.500h3.500l5-4.500v14l-5-4.500H2z" fill="none" stroke="#222428" stroke-width="1.5" stroke-linecap="round" stroke-linejoin="round" /><path d="M14.500 12h7M18 8.500v7" fill="none" stroke="#222428" stroke-width="1.5" stroke-linecap="round" stroke-linejoin="round" /></svg>
<svg class="a" style="left:2392.0px;top:772.0px;" width="22" height="22" viewBox="0 0 24 24"><path d="M2 9.500h3.500l5-4.500v14l-5-4.500H2z" fill="none" stroke="#222428" stroke-width="1.5" stroke-linecap="round" stroke-linejoin="round" /><path d="M14.500 12h7" fill="none" stroke="#222428" stroke-width="1.5" stroke-linecap="round" stroke-linejoin="round" /></svg>
<svg class="a" style="left:2391.0px;top:810.5px;" width="24" height="24" viewBox="0 0 24 24"><rect x="7.500" y="3" width="10" height="18" rx="2" transform="rotate(20 12 12)" fill="none" stroke="#222428" stroke-width="1.4" stroke-linecap="round" stroke-linejoin="round" /><path d="M4.500 8C2.500 11 2.800 15 5 18M19.500 16c2-3 1.700-7-.5-10" fill="none" stroke="#222428" stroke-width="1.4" stroke-linecap="round" stroke-linejoin="round" /></svg>
<svg class="a" style="left:2391.5px;top:851.3px;" width="23" height="23" viewBox="0 0 24 24"><path d="M12 15.500H3.500V5h15.500M2 19.500h10" fill="none" stroke="#222428" stroke-width="1.5" stroke-linecap="round" stroke-linejoin="round" /><rect x="14.500" y="8" width="7.500" height="13" rx="1.500" fill="none" stroke="#222428" stroke-width="1.5" stroke-linecap="round" stroke-linejoin="round" /><circle cx="18.200" cy="18" r="0.900" fill="#222428"/></svg>
<div class="a" style="left:2387px;top:923px;width:32px;height:1px;background:#dcdde2;"></div>
<svg class="a" style="left:2392.0px;top:933.0px;" width="22" height="22" viewBox="0 0 24 24"><path d="M18.500 3.500v17L4 12z" fill="none" stroke="#222428" stroke-width="1.5" stroke-linecap="round" stroke-linejoin="round" /></svg>
<svg class="a" style="left:2392.0px;top:972.6px;" width="22" height="22" viewBox="0 0 24 24"><circle cx="12" cy="12" r="8" fill="none" stroke="#222428" stroke-width="1.5" stroke-linecap="round" stroke-linejoin="round" /></svg>
<svg class="a" style="left:2392.0px;top:1013.0px;" width="22" height="22" viewBox="0 0 24 24"><rect x="4.500" y="4.500" width="15" height="15" rx="2" fill="none" stroke="#222428" stroke-width="1.5" stroke-linecap="round" stroke-linejoin="round" /></svg>
<svg class="a" style="left:708.0px;top:1349.0px;" width="24" height="24" viewBox="0 0 24 24"><path d="M12 3.500L22.500 21.500H1.500z" fill="#9a9eae"/><rect x="11" y="9.5" width="2" height="6" fill="#191d28"/><rect x="11" y="17" width="2" height="2" fill="#191d28"/></svg>
<svg class="a" style="left:709px;top:1376px;" width="24" height="6" viewBox="0 0 24 6"><path d="M3 5.500C7 0.500 15 0.500 20 5.500" fill="none" stroke="#3c4152" stroke-width="1.400"/></svg>
<svg class="a" style="left:762px;top:1349.5px;" width="20" height="25" viewBox="0 0 20 25"><path d="M1.200 5.500a2.500 2.500 0 0 1 2.500-2.500h12.600a2.500 2.500 0 0 1 2.500 2.500v11l-6 7h-9.100a2.500 2.500 0 0 1-2.500-2.500z" fill="none" stroke="#9a9eae" stroke-width="1.700"/><path d="M18.500 16.500h-4a2 2 0 0 0-2 2v4.500" fill="none" stroke="#9a9eae" stroke-width="1.600"/><path d="M5.500 8.500h9M5.500 13h9M5.500 17.500h4.500M5 1v2M10 1v2M15 1v2" stroke="#9a9eae" stroke-width="1.600" fill="none"/></svg>
<div class="a" style="left:804.5px;top:1342px;width:39.5px;height:40px;background:#252a37;border-radius:8px;"></div>
<svg class="a" style="left:813px;top:1351px;" width="24" height="24" viewBox="0 0 24 24"><path d="M13 20.500H4.500a3 3 0 0 1-3-3V4.500a3 3 0 0 1 3-3h13a3 3 0 0 1 3 3V11" fill="none" stroke="#fff" stroke-width="2"/><path d="M5.500 6.500l5 4.500-5 4.500" fill="none" stroke="#fff" stroke-width="2"/><ellipse cx="18" cy="18.500" rx="3" ry="4" fill="none" stroke="#fff" stroke-width="1.700"/><path d="M15.800 15a2.400 2.400 0 0 1 4.400 0M18 15v7.500M12.500 18.500h2.500M21 18.500h2.500M15.300 16l-2-1.700M20.700 16l2-1.700M15.300 21.500l-2 1.800M20.700 21.500l2 1.800" fill="none" stroke="#fff" stroke-width="1.500"/></svg>
<svg class="a" style="left:865.5px;top:1352.5px;" width="21" height="19" viewBox="0 0 21 19"><rect x="1" y="1" width="19" height="17" fill="none" stroke="#9a9eae" stroke-width="1.800"/><path d="M4.500 5.500l4 4-4 4M10.500 13.500h5" fill="none" stroke="#9a9eae" stroke-width="1.800"/></svg>
<svg class="a" style="left:917px;top:1353px;" width="22" height="18" viewBox="0 0 22 18"><path d="M8 2.500h14M8 9h14M8 15.500h14" stroke="#9a9eae" stroke-width="1.800" fill="none"/><path d="M0.500 2.500l1.800 1.800 3.200-3.600M0.500 9l1.800 1.800 3.200-3.600M0.500 15.500l1.800 1.800 3.200-3.600" stroke="#9a9eae" stroke-width="1.500" fill="none"/></svg>
<div class="a" style="left:1842px;top:1336px;width:396.5px;height:48px;border:2px solid #30364a;border-radius:8px;background:#1e2230;"></div>
<div class="t" id="f73" style="top:1344.68px;height:40px;line-height:40px;font-size:24px;color:#6a6f80;left:1856.5px;letter-spacing:-0.154px;">筛选器(例如 text、!exclude)</div>
<svg class="a" style="left:2259.0px;top:1349.0px;" width="26" height="26" viewBox="0 0 24 24"><circle cx="10.5" cy="10.5" r="7.5" fill="none" stroke="#9a9eae" stroke-width="1.9" stroke-linecap="round" stroke-linejoin="round" /><path d="M16 16L22 22" fill="none" stroke="#9a9eae" stroke-width="1.9" stroke-linecap="round" stroke-linejoin="round" /></svg>
<svg class="a" style="left:2310px;top:1353px;" width="26" height="19" viewBox="0 0 26 19"><path d="M0 1.500h25M0 9h13M0 16.500h13" stroke="#9a9eae" stroke-width="2" fill="none"/><path d="M16.500 9.500l8 8M24.500 9.500l-8 8" stroke="#9a9eae" stroke-width="2.200" fill="none"/></svg>
<div class="a" style="left:2362px;top:1344.5px;width:1.5px;height:35px;background:#343a4c;"></div>
<svg class="a" style="left:2390px;top:1350px;" width="25" height="25" viewBox="0 0 25 25"><path d="M0.500 6h13M0.500 18.500h3.500M13 18.500h11.500" stroke="#9a9eae" stroke-width="2" fill="none"/><circle cx="18.500" cy="6" r="4.200" fill="none" stroke="#9a9eae" stroke-width="2"/><circle cx="8.500" cy="18.500" r="4.200" fill="none" stroke="#9a9eae" stroke-width="2"/></svg>
<svg class="a" style="left:2443px;top:1354px;" width="22" height="13" viewBox="0 0 22 13"><path d="M0.800 12l10.200-10.500L21.200 12" fill="none" stroke="#9a9eae" stroke-width="2"/></svg>
<svg class="a" style="left:2495.5px;top:1352px;" width="21" height="21" viewBox="0 0 21 21"><path d="M0.700 0.700l19.600 19.600M20.300 0.700L0.700 20.300" stroke="#9a9eae" stroke-width="2" fill="none"/></svg>
<div class="t" style="left:742px;top:1427.76px;height:40px;line-height:40px;font-size:25.670px;font-family:'Liberation Mono','Noto Sans CJK SC',monospace;color:#4fa4fb;">════════════════════════════════════════════════════════════════════════════════════════════════════</div>
<div class="t" style="left:742px;top:1468.16px;height:40px;line-height:40px;font-size:25.670px;font-family:'Liberation Mono','Noto Sans CJK SC',monospace;color:#4fa4fb;">Another exception was thrown: No TabController for TabBar.</div>
<div class="a" style="left:684px;top:1502px;width:1866px;height:2px;background:#43464f;"></div>
<svg class="a" style="left:712px;top:1516px;" width="12" height="17" viewBox="0 0 12 17"><path d="M2 1.500l7.500 7-7.500 7" fill="none" stroke="#a4a8b6" stroke-width="3"/></svg>
</body></html>
